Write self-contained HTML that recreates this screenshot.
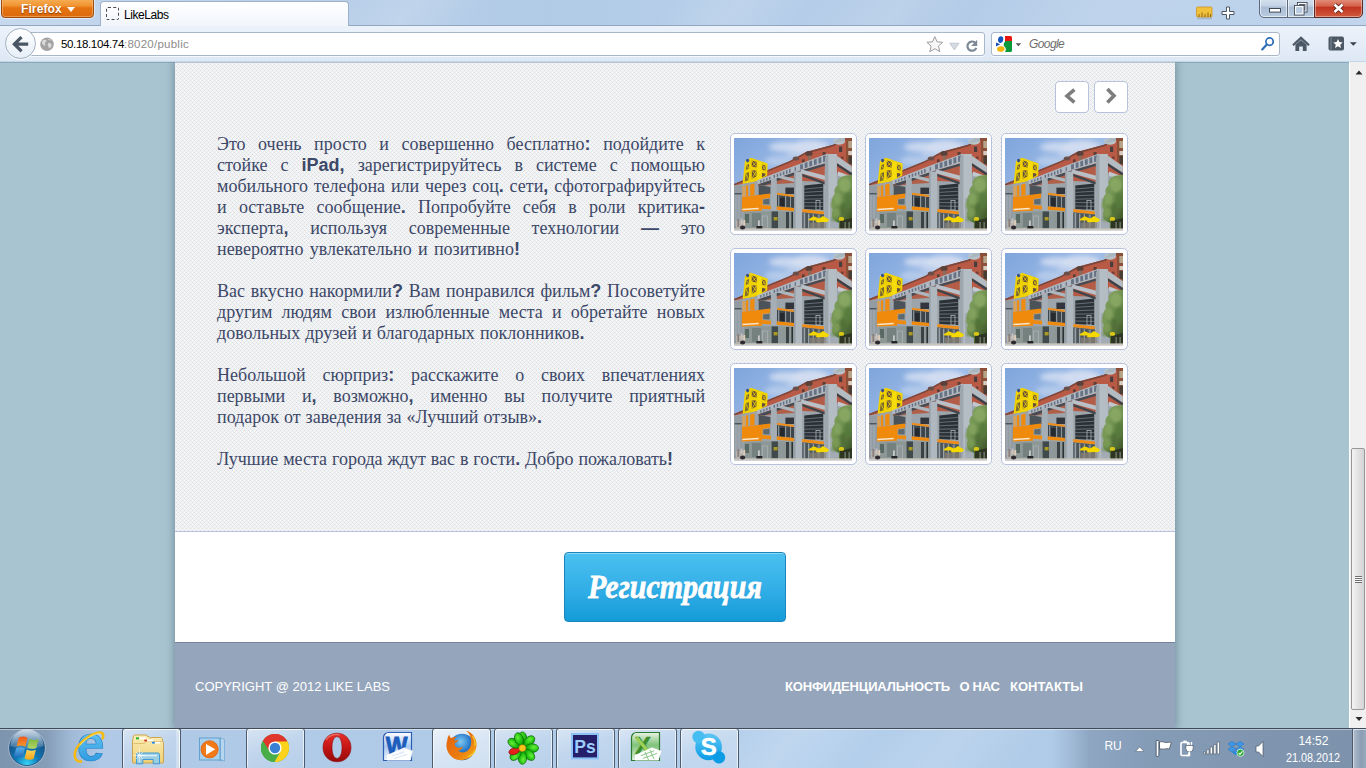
<!DOCTYPE html>
<html lang="ru">
<head>
<meta charset="utf-8">
<title>LikeLabs</title>
<style>
html,body{margin:0;padding:0;}
body{width:1366px;height:768px;overflow:hidden;position:relative;background:#a8c4d1;font-family:"Liberation Sans",sans-serif;}
.abs{position:absolute;}
/* ---------- browser chrome ---------- */
#titlebar{left:0;top:0;width:1366px;height:26px;background:linear-gradient(90deg,#c6d9ee 0%,#c0d5ec 8%,#b8cfe9 26%,#b1cae6 40%,#b6cee9 52%,#b3cbe7 68%,#b9d0ea 84%,#c1d5ec 100%);overflow:hidden;}
#titlebar .glare{left:330px;top:-40px;width:900px;height:120px;transform:skewX(-40deg);background:linear-gradient(90deg,rgba(255,255,255,0) 0%,rgba(255,255,255,.14) 8%,rgba(255,255,255,0) 16%,rgba(255,255,255,0) 36%,rgba(255,255,255,.12) 44%,rgba(255,255,255,0) 52%,rgba(255,255,255,.12) 62%,rgba(255,255,255,0) 70%,rgba(255,255,255,.1) 86%,rgba(255,255,255,0) 100%);}
#titlebar .edge{left:0;top:25px;width:1366px;height:1px;background:#93a6bf;}
#ffbtn{left:1px;top:-3px;width:93px;height:21px;border-radius:4px;border:1px solid #9c4a0c;box-sizing:border-box;background:linear-gradient(#f8b45c 0%,#f09433 40%,#e4730f 52%,#dc6a0e 100%);color:#fff;font-weight:bold;font-size:12px;line-height:23px;text-indent:19px;letter-spacing:.1px;text-shadow:0 1px 1px rgba(110,45,0,.75);box-shadow:0 0 0 1px rgba(255,255,255,.5),inset 0 0 0 1px rgba(255,210,150,.45);}
#ffbtn i{position:absolute;left:64.500px;top:9px;border:4px solid transparent;border-top:5px solid #fff;border-bottom:0;}
#tab{left:100px;top:1px;width:249px;height:26px;box-sizing:border-box;border:1px solid #9eb1c8;border-bottom:0;border-radius:4px 4px 0 0;background:linear-gradient(#ffffff,#f0f5fb);font-size:12px;color:#000;line-height:24px;}
#tab .fav{left:5px;top:5px;width:13px;height:13px;box-sizing:border-box;border:1px dashed #4a4a4a;border-radius:2px;}
#tab span{position:absolute;left:23px;top:1px;letter-spacing:-.45px;}
#wc{left:1259px;top:0;width:104px;height:18px;}
#wc .b1{left:0;top:-4px;width:29px;height:22px;box-sizing:border-box;border:1px solid #5b6a7e;border-radius:0 0 0 5px;background:linear-gradient(#dbe6f2 0%,#c3d2e4 45%,#aabdd4 50%,#b9cbdf 100%);box-shadow:inset 0 0 0 1px rgba(255,255,255,.6);}
#wc .b2{left:28px;top:-4px;width:28px;height:22px;box-sizing:border-box;border:1px solid #5b6a7e;background:linear-gradient(#dbe6f2 0%,#c3d2e4 45%,#aabdd4 50%,#b9cbdf 100%);box-shadow:inset 0 0 0 1px rgba(255,255,255,.6);}
#wc .b3{left:55px;top:-4px;width:49px;height:22px;box-sizing:border-box;border:1px solid #5a2a26;border-radius:0 0 5px 0;background:linear-gradient(#e8a08e 0%,#d5614a 45%,#c2341f 52%,#cf5a3e 100%);box-shadow:inset 0 0 0 1px rgba(255,255,255,.4);}
#navbar{left:0;top:26px;width:1366px;height:36px;background:linear-gradient(#ecf2fa,#dde8f5);}
#navbar .edge{left:0;top:35px;width:1366px;height:1px;background:#c6d6e9;}
#urlbar{left:28px;top:32px;width:957px;height:24px;box-sizing:border-box;border:1px solid #a9b8c9;border-radius:3px;background:#fff;font-size:11.500px;line-height:22px;color:#8c8c8c;letter-spacing:.25px;box-shadow:0 1px 0 rgba(255,255,255,.7);}
#urlbar b{font-weight:normal;color:#000;letter-spacing:-.35px;}
#urlbar .txt{left:32px;top:0;white-space:nowrap;}
#back{left:5px;top:28px;width:31px;height:31px;border-radius:50%;box-sizing:border-box;border:1px solid #a3b1c1;background:linear-gradient(#ffffff,#e6eef8);box-shadow:0 1px 0 rgba(255,255,255,.8);}
#search{left:991px;top:32px;width:289px;height:24px;box-sizing:border-box;border:1px solid #a9b8c9;border-radius:3px;background:#fff;font-size:12px;line-height:22px;color:#6e6e6e;font-style:italic;letter-spacing:-.6px;box-shadow:0 1px 0 rgba(255,255,255,.7);}
#search .txt{left:37px;top:0;}
/* ---------- page ---------- */
#view{left:0;top:62px;width:1349px;height:666px;background:#a8c4d1;overflow:hidden;}
#sheet{left:175px;top:0;width:1000px;height:666px;background:#fff;box-shadow:0 0 8px 1px rgba(60,85,105,.5);}
#tex{left:0;top:0;width:1000px;height:469px;background-color:#f3f4f5;border-bottom:1px solid #b9c2dc;}
.p{left:42px;width:488px;font-family:"Liberation Serif",serif;font-size:18px;line-height:21px;color:#3c4868;text-align:justify;margin:0;}
.p b{font-family:"Liberation Sans",sans-serif;font-weight:bold;font-size:18px;line-height:0;}
.ln{text-align:justify;text-align-last:justify;height:21px;white-space:normal;}
.ln.last{text-align:justify;text-align-last:justify;}
#footer{left:0;top:580px;width:1000px;height:86px;background:#95a5bb;border-top:1px solid #76859b;}
#footer .c{left:20px;top:36px;font-size:13px;color:#fff;line-height:16px;}
#footer .l{left:610px;top:36px;font-size:13px;color:#fff;line-height:16px;font-weight:bold;white-space:pre;}
#reg{left:389px;top:490px;width:222px;height:70px;box-sizing:border-box;border:1px solid #1b86bd;border-radius:4px;background:linear-gradient(#4cc0f0 0%,#31aee6 55%,#149bd8 100%);box-shadow:inset 0 1px 0 rgba(255,255,255,.35);color:#fff;text-align:center;font-family:"Liberation Serif","DejaVu Serif",serif;font-style:italic;font-weight:bold;font-size:30px;line-height:70px;-webkit-text-stroke:.7px #fff;text-shadow:0 1px 1px rgba(0,70,120,.4);}
#reg span{display:inline-block;transform:translateY(-1px) scale(1,1.150);transform-origin:50% 55%;}
.navb{top:19px;width:34px;height:32px;box-sizing:border-box;border:1px solid #b9c2dc;border-radius:4px;background:#fff;}
.thumb{width:127px;height:102px;box-sizing:border-box;border:1px solid #b9c2dc;border-radius:5px;background:#fff;}
.thumb svg{position:absolute;left:3px;top:4px;width:118px;height:92.5px;}
/* ---------- scrollbar ---------- */
#sb{left:1349px;top:62px;width:17px;height:666px;background:#f0f0f0;border-left:1px solid #fff;box-sizing:border-box;}
#sbt i{position:absolute;left:3px;top:127px;width:7px;height:7px;background:repeating-linear-gradient(#6d6d6d 0,#6d6d6d 1px,#fdfdfd 1px,#fdfdfd 2px);}
#sbt{left:1px;top:386px;width:14px;height:262px;box-sizing:border-box;border:1px solid #979797;border-radius:2px;background:linear-gradient(90deg,#f4f4f4,#e2e2e2 50%,#d4d4d4);}
/* ---------- taskbar ---------- */
#taskbar{left:0;top:728px;width:1366px;height:40px;overflow:hidden;background:linear-gradient(90deg,#7d94af 0%,#879eb9 3.500%,#9fb9d6 5.200%,#afc9e6 7.500%,#b0cbe8 40%,#b4cfec 60%,#b0cbe8 77%,#a0bad7 78.400%,#8ea6c2 79.800%,#859cb7 84%,#8096b0 92%,#7c92ab 100%);border-top:1px solid #3f4b5a;box-sizing:border-box;}
#taskbar .tglare{left:700px;top:-30px;width:330px;height:100px;transform:skewX(-42deg);background:linear-gradient(90deg,rgba(255,255,255,0),rgba(255,255,255,.16) 25%,rgba(255,255,255,0) 50%,rgba(255,255,255,.13) 75%,rgba(255,255,255,0));}
#taskbar .thl{left:0;top:0;width:1366px;height:1px;background:rgba(255,255,255,.45);}
.tb{top:-1px;width:59px;height:42px;box-sizing:border-box;border:1px solid #4d5b6e;border-radius:3px;background:linear-gradient(160deg,rgba(255,255,255,.5) 0%,rgba(255,255,255,.22) 45%,rgba(255,255,255,.1) 100%);box-shadow:inset 0 0 0 1px rgba(255,255,255,.62);}
.tb.act{background:linear-gradient(160deg,rgba(255,255,255,.75) 0%,rgba(255,255,255,.5) 50%,rgba(255,255,255,.4) 100%);}
.tb2{top:-1px;width:5px;height:42px;box-sizing:border-box;border:1px solid #4d5b6e;border-left:0;border-radius:0 3px 3px 0;background:rgba(255,255,255,.3);box-shadow:inset -1px 1px 0 rgba(255,255,255,.6);}
.showdesk{left:1352px;top:-1px;width:16px;height:42px;box-sizing:border-box;border:1px solid #4d5b6e;background:linear-gradient(90deg,rgba(255,255,255,.4),rgba(255,255,255,.1) 60%,rgba(255,255,255,.25));box-shadow:inset 0 0 0 1px rgba(255,255,255,.4);}
</style>
</head>
<body>
<svg width="0" height="0" style="position:absolute">
 <defs>
  <linearGradient id="sky" x1="0" y1="0" x2="1" y2="0.9">
   <stop offset="0" stop-color="#7fa5dc"/><stop offset="0.45" stop-color="#9dbbe6"/><stop offset="1" stop-color="#c3d3ec"/>
  </linearGradient>
  <linearGradient id="tree" x1="0" y1="0" x2="0.6" y2="1">
   <stop offset="0" stop-color="#8aa866"/><stop offset="0.6" stop-color="#688a4a"/><stop offset="1" stop-color="#42592c"/>
  </linearGradient>
  <filter id="cl" x="-30%" y="-60%" width="160%" height="220%"><feGaussianBlur stdDeviation="2.600"/></filter>
  <filter id="lf" x="-20%" y="-20%" width="140%" height="140%"><feGaussianBlur stdDeviation="1.100"/></filter>
  <filter id="soft" x="-5%" y="-5%" width="110%" height="110%"><feGaussianBlur stdDeviation="0.55"/></filter>
  <clipPath id="pc"><rect x="0" y="0" width="118" height="92.5"/></clipPath>
  
 </defs>
</svg>
<!-- content viewport -->
<div id="view" class="abs"><div class="abs" style="left:0;top:0;width:1349px;height:1px;background:rgba(90,115,140,.35);z-index:3"></div>
 <div id="sheet" class="abs">
  <div id="tex" class="abs"><svg class="abs" style="left:0;top:0" width="1000" height="469"><defs><pattern id="dots" width="4" height="4" patternUnits="userSpaceOnUse"><rect x="1" y="0" width="1" height="1" fill="#dadcdf"/><rect x="3" y="2" width="1" height="1" fill="#dadcdf"/><rect x="0" y="1" width="1" height="1" fill="#eaebed"/><rect x="2" y="1" width="1" height="1" fill="#eaebed"/><rect x="2" y="3" width="1" height="1" fill="#eaebed"/><rect x="0" y="3" width="1" height="1" fill="#eaebed"/></pattern></defs><rect width="1000" height="469" fill="url(#dots)"/></svg></div>
  <div class="abs p" style="top:72px">
   <div class="ln">Это очень просто и совершенно бесплатно<b>:</b> подойдите к</div>
   <div class="ln">стойке с <b>iPad,</b> зарегистрируйтесь в системе с помощью</div>
   <div class="ln">мобильного телефона или через соц<b>.</b> сети<b>,</b> сфотографируйтесь</div>
   <div class="ln">и оставьте сообщение<b>.</b> Попробуйте себя в роли критика<b>-</b></div>
   <div class="ln">эксперта<b>,</b> используя современные технологии <b>—</b> это</div>
   <div class="ln last" style="width:303px">невероятно увлекательно и позитивно<b>!</b></div>
  </div>
  <div class="abs p" style="top:219px">
   <div class="ln">Вас вкусно накормили<b>?</b> Вам понравился фильм<b>?</b> Посоветуйте</div>
   <div class="ln">другим людям свои излюбленные места и обретайте новых</div>
   <div class="ln last" style="width:367.5px">довольных друзей и благодарных поклонников<b>.</b></div>
  </div>
  <div class="abs p" style="top:303px">
   <div class="ln">Небольшой сюрприз<b>:</b> расскажите о своих впечатлениях</div>
   <div class="ln">первыми и<b>,</b> возможно<b>,</b> именно вы получите приятный</div>
   <div class="ln last" style="width:325px">подарок от заведения за «Лучший отзыв»<b>.</b></div>
  </div>
  <div class="abs p" style="top:387px">
   <div class="ln last" style="width:456px">Лучшие места города ждут вас в гости<b>.</b> Добро пожаловать<b>!</b></div>
  </div>
  <div class="abs navb" style="left:880px"><svg class="abs" style="left:0;top:0" width="32" height="30" viewBox="0 0 32 30"><polyline points="18.400,7.600 11,14 18.400,20.400" fill="none" stroke="#7d7d7d" stroke-width="3.600"/></svg></div>
  <div class="abs navb" style="left:919px"><svg class="abs" style="left:0;top:0" width="32" height="30" viewBox="0 0 32 30"><polyline points="12.400,7 19,13.800 12.400,20.600" fill="none" stroke="#7d7d7d" stroke-width="3.600"/></svg></div>
  <div class="abs thumb" style="left:555px;top:71px"><svg viewBox="0 0 118 92.5" preserveAspectRatio="none">
   <g clip-path="url(#pc)">
   <rect width="118" height="93" fill="url(#sky)"/>
   <g filter="url(#soft)">
    <!-- clouds -->
    <g filter="url(#cl)"><ellipse cx="52" cy="9" rx="17" ry="5" fill="#d3def2" opacity=".85"/><ellipse cx="76" cy="9" rx="19" ry="7" fill="#d6e0f2" opacity=".9"/><ellipse cx="44" cy="23" rx="13" ry="5" fill="#bccfec" opacity=".8"/><ellipse cx="62" cy="17" rx="10" ry="4" fill="#c6d5ee" opacity=".7"/></g>
    <!-- brick building -->
    <polygon points="0,46 34,32 56,23 72,14 99,6.8 112,0 118,0 118,60 0,60" fill="#b85a45"/>
    <polygon points="0,46 34,32 56,23 72,14 99,6.8 112,0 112,2 99,8.6 72,15.8 56,24.6 34,33.6 0,47.6" fill="#7a4638"/>
    <polygon points="112,0 118,0 118,30 112,26" fill="#8c5038"/>
    <rect x="114.3" y="3" width="3.7" height="7" fill="#b7a488"/><rect x="114.3" y="13" width="3.7" height="4" fill="#d4ccc0"/><rect x="114.5" y="18" width="3.5" height="8" fill="#4a3d35"/>
    <ellipse cx="105" cy="3.6" rx="6" ry="3.2" fill="#b8c2c8"/>
    <polygon points="99.5,5 105,0.3 111,0.3 111,3" fill="#a9b6bd"/>
    <ellipse cx="75" cy="15.5" rx="3.6" ry="2.6" fill="#5a4038"/>
    <ellipse cx="62" cy="20.5" rx="3.2" ry="2" fill="#6a5048"/>
    <rect x="105" y="8.6" width="3.2" height="5.4" fill="#4a3d3d"/>
    <rect x="88.6" y="14" width="3" height="3.4" fill="#5a3c34"/>
    <rect x="74" y="17.6" width="3.4" height="4.4" fill="#8c6a58"/>
    <rect x="68" y="21.4" width="2.6" height="3" fill="#5a3c34"/>
    <rect x="89" y="27" width="3" height="5" fill="#6a3d32"/>
    <rect x="107" y="18.6" width="2.4" height="3" fill="#6a3d32"/>
    <!-- yellow tower -->
    <polygon points="11,23 17,19.800 33.600,25.600 33.200,37.400 24,43 14,45.400 8.600,46" fill="#efd200"/>
    <polygon points="17.800,22.600 22.600,24 22.600,29.400 17.800,28.600" fill="#5e4440"/>
    <polygon points="28,26.600 31.600,27.800 31.600,32.400 28,31.800" fill="#5e4440"/>
    <polygon points="17.800,32 22.400,32.800 22.400,38.200 17.800,41" fill="#66503e"/>
    <polygon points="28,35 31.400,35.400 31.200,37.400 28,39.400" fill="#66503e"/>
    <polygon points="12.200,27.400 15,25.800 15,30.600 11.800,32" fill="#7c6c30"/>
    <polygon points="11.600,35.400 15,34 15,42 10.800,43.400" fill="#7c6c30"/>
    <path d="M17.800 22.600l4.800 6.800M22.600 24l-4.800 4.600M28 26.600l3.600 5.800M31.600 27.800l-3.600 4M17.800 32l4.600 6.200M22.400 32.800l-4.600 8.200M12.200 27.400l2.800 3.200M11.600 35.400l3.400 6.600" stroke="#e8cc0c" stroke-width=".9" fill="none"/>
    <rect x="23.200" y="24" width="4.200" height="19" fill="#f6dc08"/>
    <ellipse cx="13.600" cy="22.600" rx="1.600" ry="1.800" fill="#3a4f8a"/>
    <!-- grey facade base -->
    <polygon points="0,47.6 8,46 24,43 36,41 60,38 94,33 118,38 118,93 0,93" fill="#9ca5ac"/>
    <!-- brick visible below main beam -->
    <polygon points="68,30 94,21 94,44 68,43" fill="#b35c47"/><polygon points="42.700,39 60,33 60,45 42.700,46" fill="#b05e4a"/><polygon points="24,46 37,41.600 37,47 24,48" fill="#a86452"/>
    <polygon points="67.7,37.6 77.5,38.6 77.5,43 67.7,42" fill="#b65a44"/>
    <polygon points="103,17 118,28 118,40 103,34" fill="#b65a44"/>
    
    <!-- beam undersides (dark) -->
    <polygon points="24,46.200 62,33.800 93.800,24.600 93.800,27 62,36.600 30,47.400" fill="#474c52"/>
    <polygon points="66,35 92,44.6 92,47 66,37.6" fill="#40454b"/>
    <polygon points="103,25 118,34.6 118,38 103,28" fill="#3c4147"/>
    <!-- second beam (receding) -->
    <polygon points="67.6,31.6 94.4,38.6 94.4,43 66,35" fill="#b9c0c7"/>
    <polygon points="43,36.6 60,40.6 60,44 43,39.6" fill="#aeb6bd"/>
    <polygon points="104,33.6 117.8,38.6 117.8,41 104,38" fill="#c2c8ce"/>
    <!-- main beam with letters -->
    <polygon points="22.700,42.400 62,27.200 93.800,15.600 93.800,24.600 62,33.800 24,46.200" fill="#b0b8c1"/>
    <g fill="#667284">
     <polygon points="26,42.600 27.400,42.100 27.600,44.200 26.200,44.700"/><polygon points="29,41.500 30.400,41 30.600,43.200 29.200,43.700"/><polygon points="32,40.300 33.400,39.800 33.600,42.200 32.200,42.700"/><polygon points="35,39.200 36.400,38.700 36.600,41.200 35.200,41.700"/>
     <polygon points="39.500,37.300 41,36.800 41.200,39.600 39.700,40.100"/><polygon points="42.600,36.100 44.100,35.600 44.300,38.600 42.800,39.100"/><polygon points="45.700,34.900 47.200,34.400 47.400,37.500 45.900,38"/><polygon points="48.800,33.700 50.300,33.200 50.500,36.500 49,37"/><polygon points="51.900,32.500 53.400,32 53.600,35.500 52.100,36"/><polygon points="55,31.300 56.500,30.800 56.700,34.500 55.200,35"/>
     <polygon points="60.600,29.400 61.800,29 62,32.600 60.800,33"/>
     <polygon points="66,26.800 68.800,25.800 69,30.800 66.200,31.700"/><polygon points="70.600,25.100 73.400,24.100 73.600,29.300 70.800,30.200"/><polygon points="75.200,23.400 78,22.400 78.200,27.800 75.400,28.700"/><polygon points="79.800,21.700 82.600,20.700 82.800,26.300 80,27.200"/><polygon points="84.400,20 87.200,19 87.400,24.800 84.600,25.700"/><polygon points="89,18.300 91.800,17.300 92,23.300 89.200,24.200"/>
    </g>
    <!-- right diagonal beam -->
    <polygon points="102.9,17.8 117.8,28.2 117.8,34.7 102.9,25" fill="#b4bcc3"/>
    <!-- left wall -->
    <rect x="0" y="47.6" width="8.4" height="44" fill="#939ca3"/>
    <rect x="0.6" y="55" width="7" height="1.4" fill="#4e565e"/>
    <rect x="1.6" y="57" width="0.8" height="30" fill="#aab2b8"/><rect x="4.6" y="57" width="0.8" height="30" fill="#aab2b8"/>
    <!-- glass upper areas -->
    <polygon points="24.7,47 36.4,49 36.4,56 24.7,57.5" fill="#4b5359"/>
    <rect x="51.4" y="49.6" width="8.6" height="6.4" fill="#30363b"/>
    <polygon points="43,57 60,59 60,70 43,68.4" fill="#3d444b"/>
    <rect x="44.2" y="57.4" width="1" height="11.4" fill="#9aa3a9"/><rect x="51" y="58" width="1.2" height="11.4" fill="#8e979d"/><rect x="56" y="58.6" width="1" height="11.2" fill="#8e979d"/>
    <rect x="46" y="60" width="4.6" height="8" fill="#252a2f"/>
    <polygon points="70.3,47.6 89.2,45.6 89.2,72 70.3,71" fill="#2b3137"/>
    <g stroke="#7f8990" stroke-width="0.7"><line x1="70.3" y1="51" x2="89.2" y2="49.4"/><line x1="70.3" y1="54.4" x2="89.2" y2="53.2"/><line x1="70.3" y1="57.8" x2="89.2" y2="57"/><line x1="70.3" y1="61.2" x2="89.2" y2="60.8"/><line x1="70.3" y1="64.6" x2="89.2" y2="64.6"/><line x1="70.3" y1="68" x2="89.2" y2="68.4"/></g>
    <rect x="82" y="62.4" width="4" height="9.6" fill="none" stroke="#aab3b9" stroke-width="0.8"/>
    <!-- orange -->
    <rect x="8.4" y="48" width="3" height="11" fill="#d9a05a"/>
    <polygon points="12,47.4 14.2,47 14.2,58 12,58.4" fill="#f08c10"/>
    <polygon points="16.2,46.4 20.5,45.6 20.5,57.2 16.2,57.8" fill="#f08c10"/>
    <polygon points="8.1,59 28,56.4 36.1,55.4 36.1,60 28.6,61 28.6,67.1 59.8,70.1 59.8,73 28,70.7 28,72.7 7.8,73.6" fill="#ef8a0e"/>
    <polygon points="8.4,70.7 24.7,69.7 24.7,71.3 8.4,72.3" fill="#f8e6cc"/>
    <polygon points="29.2,61.6 35.6,60.8 35.6,66.6 29.2,66.2" fill="#5d6a70"/>
    <polygon points="42.9,54.8 59.8,57 59.8,59 42.9,56.8" fill="#ee8c14"/>
    <polygon points="56,69.8 60,70.2 60,73.2 56,72.8" fill="#ef8a0e"/>
    <polygon points="67,71 89.9,73.6 89.9,76.4 67,74" fill="#ee8c14"/>
    <!-- ground floor glass -->
    <polygon points="9.700,74.200 28,73.200 59.800,73.400 59.800,90.600 9.700,90.600" fill="#8d9896"/>
    <rect x="11" y="76" width="4" height="9" fill="#596762"/>
    <rect x="18" y="75" width="9" height="14" fill="#74817e"/>
    <rect x="37.600" y="73.400" width="6.400" height="17" fill="#414a4c"/>
    <rect x="39.6" y="79" width="4" height="3.4" fill="#a89a22"/>
    <rect x="52" y="74" width="3" height="16.600" fill="#3a4245"/>
    <rect x="57.4" y="74" width="1.6" height="16.6" fill="#2c3336"/>
    <rect x="28.4" y="78" width="5" height="12.6" fill="none" stroke="#a9b1b4" stroke-width="0.8"/>
    <rect x="45.4" y="73.4" width="3.2" height="17.2" fill="#8f999c"/>
    <polygon points="67,74.300 90,76.600 90,90.600 67,90.600" fill="#4d5559"/>
    <rect x="69.6" y="75" width="1.6" height="15.6" fill="#98a1a5"/><rect x="74" y="75.6" width="1.4" height="15" fill="#98a1a5"/><rect x="78.6" y="76" width="1.4" height="14.6" fill="#8c9599"/><rect x="83.6" y="76.4" width="2.4" height="14.2" fill="#7c868b"/>
    <!-- columns -->
    <polygon points="37,41 42.7,39.6 42.7,73 37,72.4" fill="#a5aeb5"/>
    <rect x="60" y="33.5" width="8.2" height="57.6" fill="#b0b8bf"/>
    <rect x="60" y="33.5" width="1.6" height="57.6" fill="#969fa7"/>
    <polygon points="91,20 94.4,16 102.9,15.9 103,91 90.4,91" fill="#b5bdc4"/>
    <polygon points="91,20 94.4,16 94.4,91 90.4,91" fill="#9da6ad"/>
    <rect x="96" y="60" width="8" height="31" fill="#a3acb4"/>
    <!-- umbrellas -->
    <polygon points="74.2,81.6 79.6,78.2 85.3,80.6 84,82.4 75.6,82.4" fill="#f2d400"/>
    <polygon points="81.4,83 89,77.9 95,81.6 93.6,84 83,84.4" fill="#f5d800"/>
    <rect x="76" y="84.6" width="16" height="5.6" fill="#8a8478" opacity=".7"/>
    <!-- tree -->
    <path d="M104,47 C102,42 107,38 112,37.600 L118,36.800 L118,92 L105,92 L105,85 C99,83 96.600,78 99,72 C96,67 97.600,59 101,56 C99.600,52 101,49 104,47Z" fill="url(#tree)"/>
    <g filter="url(#lf)">
     <ellipse cx="111" cy="47" rx="6" ry="7" fill="#8cab66" opacity=".8"/>
     <ellipse cx="103.500" cy="61" rx="4" ry="6" fill="#86a660" opacity=".8"/>
     <ellipse cx="114" cy="62" rx="4" ry="8" fill="#557a3c" opacity=".8"/>
     <ellipse cx="102" cy="75" rx="4" ry="5" fill="#7e9e58" opacity=".8"/>
     <ellipse cx="109" cy="71" rx="3" ry="6" fill="#4c6e36" opacity=".75"/>
     <ellipse cx="99" cy="68" rx="2.400" ry="3" fill="#7d9d5a" opacity=".7"/>
     <ellipse cx="100" cy="81" rx="3" ry="2.400" fill="#6c8c4c" opacity=".7"/>
    </g>
    <polygon points="106,83 118,80 118,92 106,92" fill="#2d3622"/>
    <rect x="104.800" y="79" width="5.200" height="3.800" rx="1.600" fill="#d8c616"/>
    <rect x="110.600" y="84" width="1" height="8" fill="#8d968c"/><rect x="114.600" y="84" width="1" height="8" fill="#8d968c"/>
    <!-- ground + people -->
    <rect x="0" y="90.4" width="118" height="2.6" fill="#cbc6bd"/>
    <rect x="2" y="83" width="9" height="8" fill="#b7b4b0"/>
    <rect x="3.4" y="81" width="1.8" height="8" fill="#8a7f7a"/><rect x="6.6" y="80.6" width="1.8" height="5" fill="#c9c4c0"/><rect x="9.4" y="82" width="1.8" height="5" fill="#e0cdb8"/>
    <ellipse cx="8.6" cy="89.4" rx="2.6" ry="2" fill="#2d2a30"/>
    <rect x="24" y="82.4" width="1.8" height="6.6" fill="#c7c9cc"/><rect x="22.4" y="88" width="6" height="2.4" fill="#26282c"/>
   </g>
   </g>
</svg></div>
  <div class="abs thumb" style="left:690px;top:71px"><svg viewBox="0 0 118 92.5" preserveAspectRatio="none">
   <g clip-path="url(#pc)">
   <rect width="118" height="93" fill="url(#sky)"/>
   <g filter="url(#soft)">
    <!-- clouds -->
    <g filter="url(#cl)"><ellipse cx="52" cy="9" rx="17" ry="5" fill="#d3def2" opacity=".85"/><ellipse cx="76" cy="9" rx="19" ry="7" fill="#d6e0f2" opacity=".9"/><ellipse cx="44" cy="23" rx="13" ry="5" fill="#bccfec" opacity=".8"/><ellipse cx="62" cy="17" rx="10" ry="4" fill="#c6d5ee" opacity=".7"/></g>
    <!-- brick building -->
    <polygon points="0,46 34,32 56,23 72,14 99,6.8 112,0 118,0 118,60 0,60" fill="#b85a45"/>
    <polygon points="0,46 34,32 56,23 72,14 99,6.8 112,0 112,2 99,8.6 72,15.8 56,24.6 34,33.6 0,47.6" fill="#7a4638"/>
    <polygon points="112,0 118,0 118,30 112,26" fill="#8c5038"/>
    <rect x="114.3" y="3" width="3.7" height="7" fill="#b7a488"/><rect x="114.3" y="13" width="3.7" height="4" fill="#d4ccc0"/><rect x="114.5" y="18" width="3.5" height="8" fill="#4a3d35"/>
    <ellipse cx="105" cy="3.6" rx="6" ry="3.2" fill="#b8c2c8"/>
    <polygon points="99.5,5 105,0.3 111,0.3 111,3" fill="#a9b6bd"/>
    <ellipse cx="75" cy="15.5" rx="3.6" ry="2.6" fill="#5a4038"/>
    <ellipse cx="62" cy="20.5" rx="3.2" ry="2" fill="#6a5048"/>
    <rect x="105" y="8.6" width="3.2" height="5.4" fill="#4a3d3d"/>
    <rect x="88.6" y="14" width="3" height="3.4" fill="#5a3c34"/>
    <rect x="74" y="17.6" width="3.4" height="4.4" fill="#8c6a58"/>
    <rect x="68" y="21.4" width="2.6" height="3" fill="#5a3c34"/>
    <rect x="89" y="27" width="3" height="5" fill="#6a3d32"/>
    <rect x="107" y="18.6" width="2.4" height="3" fill="#6a3d32"/>
    <!-- yellow tower -->
    <polygon points="11,23 17,19.800 33.600,25.600 33.200,37.400 24,43 14,45.400 8.600,46" fill="#efd200"/>
    <polygon points="17.800,22.600 22.600,24 22.600,29.400 17.800,28.600" fill="#5e4440"/>
    <polygon points="28,26.600 31.600,27.800 31.600,32.400 28,31.800" fill="#5e4440"/>
    <polygon points="17.800,32 22.400,32.800 22.400,38.200 17.800,41" fill="#66503e"/>
    <polygon points="28,35 31.400,35.400 31.200,37.400 28,39.400" fill="#66503e"/>
    <polygon points="12.200,27.400 15,25.800 15,30.600 11.800,32" fill="#7c6c30"/>
    <polygon points="11.600,35.400 15,34 15,42 10.800,43.400" fill="#7c6c30"/>
    <path d="M17.800 22.600l4.800 6.800M22.600 24l-4.800 4.600M28 26.600l3.600 5.800M31.600 27.800l-3.600 4M17.800 32l4.600 6.200M22.400 32.800l-4.600 8.200M12.200 27.400l2.800 3.200M11.600 35.400l3.400 6.600" stroke="#e8cc0c" stroke-width=".9" fill="none"/>
    <rect x="23.200" y="24" width="4.200" height="19" fill="#f6dc08"/>
    <ellipse cx="13.600" cy="22.600" rx="1.600" ry="1.800" fill="#3a4f8a"/>
    <!-- grey facade base -->
    <polygon points="0,47.6 8,46 24,43 36,41 60,38 94,33 118,38 118,93 0,93" fill="#9ca5ac"/>
    <!-- brick visible below main beam -->
    <polygon points="68,30 94,21 94,44 68,43" fill="#b35c47"/><polygon points="42.700,39 60,33 60,45 42.700,46" fill="#b05e4a"/><polygon points="24,46 37,41.600 37,47 24,48" fill="#a86452"/>
    <polygon points="67.7,37.6 77.5,38.6 77.5,43 67.7,42" fill="#b65a44"/>
    <polygon points="103,17 118,28 118,40 103,34" fill="#b65a44"/>
    
    <!-- beam undersides (dark) -->
    <polygon points="24,46.200 62,33.800 93.800,24.600 93.800,27 62,36.600 30,47.400" fill="#474c52"/>
    <polygon points="66,35 92,44.6 92,47 66,37.6" fill="#40454b"/>
    <polygon points="103,25 118,34.6 118,38 103,28" fill="#3c4147"/>
    <!-- second beam (receding) -->
    <polygon points="67.6,31.6 94.4,38.6 94.4,43 66,35" fill="#b9c0c7"/>
    <polygon points="43,36.6 60,40.6 60,44 43,39.6" fill="#aeb6bd"/>
    <polygon points="104,33.6 117.8,38.6 117.8,41 104,38" fill="#c2c8ce"/>
    <!-- main beam with letters -->
    <polygon points="22.700,42.400 62,27.200 93.800,15.600 93.800,24.600 62,33.800 24,46.200" fill="#b0b8c1"/>
    <g fill="#667284">
     <polygon points="26,42.600 27.400,42.100 27.600,44.200 26.200,44.700"/><polygon points="29,41.500 30.400,41 30.600,43.200 29.200,43.700"/><polygon points="32,40.300 33.400,39.800 33.600,42.200 32.200,42.700"/><polygon points="35,39.200 36.400,38.700 36.600,41.200 35.200,41.700"/>
     <polygon points="39.500,37.300 41,36.800 41.200,39.600 39.700,40.100"/><polygon points="42.600,36.100 44.100,35.600 44.300,38.600 42.800,39.100"/><polygon points="45.700,34.900 47.200,34.400 47.400,37.500 45.900,38"/><polygon points="48.800,33.700 50.300,33.200 50.500,36.500 49,37"/><polygon points="51.900,32.500 53.400,32 53.600,35.500 52.100,36"/><polygon points="55,31.300 56.500,30.800 56.700,34.500 55.200,35"/>
     <polygon points="60.600,29.400 61.800,29 62,32.600 60.800,33"/>
     <polygon points="66,26.800 68.800,25.800 69,30.800 66.200,31.700"/><polygon points="70.600,25.100 73.400,24.100 73.600,29.300 70.800,30.200"/><polygon points="75.200,23.400 78,22.400 78.200,27.800 75.400,28.700"/><polygon points="79.800,21.700 82.600,20.700 82.800,26.300 80,27.200"/><polygon points="84.400,20 87.200,19 87.400,24.800 84.600,25.700"/><polygon points="89,18.300 91.800,17.300 92,23.300 89.200,24.200"/>
    </g>
    <!-- right diagonal beam -->
    <polygon points="102.9,17.8 117.8,28.2 117.8,34.7 102.9,25" fill="#b4bcc3"/>
    <!-- left wall -->
    <rect x="0" y="47.6" width="8.4" height="44" fill="#939ca3"/>
    <rect x="0.6" y="55" width="7" height="1.4" fill="#4e565e"/>
    <rect x="1.6" y="57" width="0.8" height="30" fill="#aab2b8"/><rect x="4.6" y="57" width="0.8" height="30" fill="#aab2b8"/>
    <!-- glass upper areas -->
    <polygon points="24.7,47 36.4,49 36.4,56 24.7,57.5" fill="#4b5359"/>
    <rect x="51.4" y="49.6" width="8.6" height="6.4" fill="#30363b"/>
    <polygon points="43,57 60,59 60,70 43,68.4" fill="#3d444b"/>
    <rect x="44.2" y="57.4" width="1" height="11.4" fill="#9aa3a9"/><rect x="51" y="58" width="1.2" height="11.4" fill="#8e979d"/><rect x="56" y="58.6" width="1" height="11.2" fill="#8e979d"/>
    <rect x="46" y="60" width="4.6" height="8" fill="#252a2f"/>
    <polygon points="70.3,47.6 89.2,45.6 89.2,72 70.3,71" fill="#2b3137"/>
    <g stroke="#7f8990" stroke-width="0.7"><line x1="70.3" y1="51" x2="89.2" y2="49.4"/><line x1="70.3" y1="54.4" x2="89.2" y2="53.2"/><line x1="70.3" y1="57.8" x2="89.2" y2="57"/><line x1="70.3" y1="61.2" x2="89.2" y2="60.8"/><line x1="70.3" y1="64.6" x2="89.2" y2="64.6"/><line x1="70.3" y1="68" x2="89.2" y2="68.4"/></g>
    <rect x="82" y="62.4" width="4" height="9.6" fill="none" stroke="#aab3b9" stroke-width="0.8"/>
    <!-- orange -->
    <rect x="8.4" y="48" width="3" height="11" fill="#d9a05a"/>
    <polygon points="12,47.4 14.2,47 14.2,58 12,58.4" fill="#f08c10"/>
    <polygon points="16.2,46.4 20.5,45.6 20.5,57.2 16.2,57.8" fill="#f08c10"/>
    <polygon points="8.1,59 28,56.4 36.1,55.4 36.1,60 28.6,61 28.6,67.1 59.8,70.1 59.8,73 28,70.7 28,72.7 7.8,73.6" fill="#ef8a0e"/>
    <polygon points="8.4,70.7 24.7,69.7 24.7,71.3 8.4,72.3" fill="#f8e6cc"/>
    <polygon points="29.2,61.6 35.6,60.8 35.6,66.6 29.2,66.2" fill="#5d6a70"/>
    <polygon points="42.9,54.8 59.8,57 59.8,59 42.9,56.8" fill="#ee8c14"/>
    <polygon points="56,69.8 60,70.2 60,73.2 56,72.8" fill="#ef8a0e"/>
    <polygon points="67,71 89.9,73.6 89.9,76.4 67,74" fill="#ee8c14"/>
    <!-- ground floor glass -->
    <polygon points="9.700,74.200 28,73.200 59.800,73.400 59.800,90.600 9.700,90.600" fill="#8d9896"/>
    <rect x="11" y="76" width="4" height="9" fill="#596762"/>
    <rect x="18" y="75" width="9" height="14" fill="#74817e"/>
    <rect x="37.600" y="73.400" width="6.400" height="17" fill="#414a4c"/>
    <rect x="39.6" y="79" width="4" height="3.4" fill="#a89a22"/>
    <rect x="52" y="74" width="3" height="16.600" fill="#3a4245"/>
    <rect x="57.4" y="74" width="1.6" height="16.6" fill="#2c3336"/>
    <rect x="28.4" y="78" width="5" height="12.6" fill="none" stroke="#a9b1b4" stroke-width="0.8"/>
    <rect x="45.4" y="73.4" width="3.2" height="17.2" fill="#8f999c"/>
    <polygon points="67,74.300 90,76.600 90,90.600 67,90.600" fill="#4d5559"/>
    <rect x="69.6" y="75" width="1.6" height="15.6" fill="#98a1a5"/><rect x="74" y="75.6" width="1.4" height="15" fill="#98a1a5"/><rect x="78.6" y="76" width="1.4" height="14.6" fill="#8c9599"/><rect x="83.6" y="76.4" width="2.4" height="14.2" fill="#7c868b"/>
    <!-- columns -->
    <polygon points="37,41 42.7,39.6 42.7,73 37,72.4" fill="#a5aeb5"/>
    <rect x="60" y="33.5" width="8.2" height="57.6" fill="#b0b8bf"/>
    <rect x="60" y="33.5" width="1.6" height="57.6" fill="#969fa7"/>
    <polygon points="91,20 94.4,16 102.9,15.9 103,91 90.4,91" fill="#b5bdc4"/>
    <polygon points="91,20 94.4,16 94.4,91 90.4,91" fill="#9da6ad"/>
    <rect x="96" y="60" width="8" height="31" fill="#a3acb4"/>
    <!-- umbrellas -->
    <polygon points="74.2,81.6 79.6,78.2 85.3,80.6 84,82.4 75.6,82.4" fill="#f2d400"/>
    <polygon points="81.4,83 89,77.9 95,81.6 93.6,84 83,84.4" fill="#f5d800"/>
    <rect x="76" y="84.6" width="16" height="5.6" fill="#8a8478" opacity=".7"/>
    <!-- tree -->
    <path d="M104,47 C102,42 107,38 112,37.600 L118,36.800 L118,92 L105,92 L105,85 C99,83 96.600,78 99,72 C96,67 97.600,59 101,56 C99.600,52 101,49 104,47Z" fill="url(#tree)"/>
    <g filter="url(#lf)">
     <ellipse cx="111" cy="47" rx="6" ry="7" fill="#8cab66" opacity=".8"/>
     <ellipse cx="103.500" cy="61" rx="4" ry="6" fill="#86a660" opacity=".8"/>
     <ellipse cx="114" cy="62" rx="4" ry="8" fill="#557a3c" opacity=".8"/>
     <ellipse cx="102" cy="75" rx="4" ry="5" fill="#7e9e58" opacity=".8"/>
     <ellipse cx="109" cy="71" rx="3" ry="6" fill="#4c6e36" opacity=".75"/>
     <ellipse cx="99" cy="68" rx="2.400" ry="3" fill="#7d9d5a" opacity=".7"/>
     <ellipse cx="100" cy="81" rx="3" ry="2.400" fill="#6c8c4c" opacity=".7"/>
    </g>
    <polygon points="106,83 118,80 118,92 106,92" fill="#2d3622"/>
    <rect x="104.800" y="79" width="5.200" height="3.800" rx="1.600" fill="#d8c616"/>
    <rect x="110.600" y="84" width="1" height="8" fill="#8d968c"/><rect x="114.600" y="84" width="1" height="8" fill="#8d968c"/>
    <!-- ground + people -->
    <rect x="0" y="90.4" width="118" height="2.6" fill="#cbc6bd"/>
    <rect x="2" y="83" width="9" height="8" fill="#b7b4b0"/>
    <rect x="3.4" y="81" width="1.8" height="8" fill="#8a7f7a"/><rect x="6.6" y="80.6" width="1.8" height="5" fill="#c9c4c0"/><rect x="9.4" y="82" width="1.8" height="5" fill="#e0cdb8"/>
    <ellipse cx="8.6" cy="89.4" rx="2.6" ry="2" fill="#2d2a30"/>
    <rect x="24" y="82.4" width="1.8" height="6.6" fill="#c7c9cc"/><rect x="22.4" y="88" width="6" height="2.4" fill="#26282c"/>
   </g>
   </g>
</svg></div>
  <div class="abs thumb" style="left:826px;top:71px"><svg viewBox="0 0 118 92.5" preserveAspectRatio="none">
   <g clip-path="url(#pc)">
   <rect width="118" height="93" fill="url(#sky)"/>
   <g filter="url(#soft)">
    <!-- clouds -->
    <g filter="url(#cl)"><ellipse cx="52" cy="9" rx="17" ry="5" fill="#d3def2" opacity=".85"/><ellipse cx="76" cy="9" rx="19" ry="7" fill="#d6e0f2" opacity=".9"/><ellipse cx="44" cy="23" rx="13" ry="5" fill="#bccfec" opacity=".8"/><ellipse cx="62" cy="17" rx="10" ry="4" fill="#c6d5ee" opacity=".7"/></g>
    <!-- brick building -->
    <polygon points="0,46 34,32 56,23 72,14 99,6.8 112,0 118,0 118,60 0,60" fill="#b85a45"/>
    <polygon points="0,46 34,32 56,23 72,14 99,6.8 112,0 112,2 99,8.6 72,15.8 56,24.6 34,33.6 0,47.6" fill="#7a4638"/>
    <polygon points="112,0 118,0 118,30 112,26" fill="#8c5038"/>
    <rect x="114.3" y="3" width="3.7" height="7" fill="#b7a488"/><rect x="114.3" y="13" width="3.7" height="4" fill="#d4ccc0"/><rect x="114.5" y="18" width="3.5" height="8" fill="#4a3d35"/>
    <ellipse cx="105" cy="3.6" rx="6" ry="3.2" fill="#b8c2c8"/>
    <polygon points="99.5,5 105,0.3 111,0.3 111,3" fill="#a9b6bd"/>
    <ellipse cx="75" cy="15.5" rx="3.6" ry="2.6" fill="#5a4038"/>
    <ellipse cx="62" cy="20.5" rx="3.2" ry="2" fill="#6a5048"/>
    <rect x="105" y="8.6" width="3.2" height="5.4" fill="#4a3d3d"/>
    <rect x="88.6" y="14" width="3" height="3.4" fill="#5a3c34"/>
    <rect x="74" y="17.6" width="3.4" height="4.4" fill="#8c6a58"/>
    <rect x="68" y="21.4" width="2.6" height="3" fill="#5a3c34"/>
    <rect x="89" y="27" width="3" height="5" fill="#6a3d32"/>
    <rect x="107" y="18.6" width="2.4" height="3" fill="#6a3d32"/>
    <!-- yellow tower -->
    <polygon points="11,23 17,19.800 33.600,25.600 33.200,37.400 24,43 14,45.400 8.600,46" fill="#efd200"/>
    <polygon points="17.800,22.600 22.600,24 22.600,29.400 17.800,28.600" fill="#5e4440"/>
    <polygon points="28,26.600 31.600,27.800 31.600,32.400 28,31.800" fill="#5e4440"/>
    <polygon points="17.800,32 22.400,32.800 22.400,38.200 17.800,41" fill="#66503e"/>
    <polygon points="28,35 31.400,35.400 31.200,37.400 28,39.400" fill="#66503e"/>
    <polygon points="12.200,27.400 15,25.800 15,30.600 11.800,32" fill="#7c6c30"/>
    <polygon points="11.600,35.400 15,34 15,42 10.800,43.400" fill="#7c6c30"/>
    <path d="M17.800 22.600l4.800 6.800M22.600 24l-4.800 4.600M28 26.600l3.600 5.800M31.600 27.800l-3.600 4M17.800 32l4.600 6.200M22.400 32.800l-4.600 8.200M12.200 27.400l2.800 3.200M11.600 35.400l3.400 6.600" stroke="#e8cc0c" stroke-width=".9" fill="none"/>
    <rect x="23.200" y="24" width="4.200" height="19" fill="#f6dc08"/>
    <ellipse cx="13.600" cy="22.600" rx="1.600" ry="1.800" fill="#3a4f8a"/>
    <!-- grey facade base -->
    <polygon points="0,47.6 8,46 24,43 36,41 60,38 94,33 118,38 118,93 0,93" fill="#9ca5ac"/>
    <!-- brick visible below main beam -->
    <polygon points="68,30 94,21 94,44 68,43" fill="#b35c47"/><polygon points="42.700,39 60,33 60,45 42.700,46" fill="#b05e4a"/><polygon points="24,46 37,41.600 37,47 24,48" fill="#a86452"/>
    <polygon points="67.7,37.6 77.5,38.6 77.5,43 67.7,42" fill="#b65a44"/>
    <polygon points="103,17 118,28 118,40 103,34" fill="#b65a44"/>
    
    <!-- beam undersides (dark) -->
    <polygon points="24,46.200 62,33.800 93.800,24.600 93.800,27 62,36.600 30,47.400" fill="#474c52"/>
    <polygon points="66,35 92,44.6 92,47 66,37.6" fill="#40454b"/>
    <polygon points="103,25 118,34.6 118,38 103,28" fill="#3c4147"/>
    <!-- second beam (receding) -->
    <polygon points="67.6,31.6 94.4,38.6 94.4,43 66,35" fill="#b9c0c7"/>
    <polygon points="43,36.6 60,40.6 60,44 43,39.6" fill="#aeb6bd"/>
    <polygon points="104,33.6 117.8,38.6 117.8,41 104,38" fill="#c2c8ce"/>
    <!-- main beam with letters -->
    <polygon points="22.700,42.400 62,27.200 93.800,15.600 93.800,24.600 62,33.800 24,46.200" fill="#b0b8c1"/>
    <g fill="#667284">
     <polygon points="26,42.600 27.400,42.100 27.600,44.200 26.200,44.700"/><polygon points="29,41.500 30.400,41 30.600,43.200 29.200,43.700"/><polygon points="32,40.300 33.400,39.800 33.600,42.200 32.200,42.700"/><polygon points="35,39.200 36.400,38.700 36.600,41.200 35.200,41.700"/>
     <polygon points="39.500,37.300 41,36.800 41.200,39.600 39.700,40.100"/><polygon points="42.600,36.100 44.100,35.600 44.300,38.600 42.800,39.100"/><polygon points="45.700,34.900 47.200,34.400 47.400,37.500 45.900,38"/><polygon points="48.800,33.700 50.300,33.200 50.500,36.500 49,37"/><polygon points="51.900,32.500 53.400,32 53.600,35.500 52.100,36"/><polygon points="55,31.300 56.500,30.800 56.700,34.500 55.200,35"/>
     <polygon points="60.600,29.400 61.800,29 62,32.600 60.800,33"/>
     <polygon points="66,26.800 68.800,25.800 69,30.800 66.200,31.700"/><polygon points="70.600,25.100 73.400,24.100 73.600,29.300 70.800,30.200"/><polygon points="75.200,23.400 78,22.400 78.200,27.800 75.400,28.700"/><polygon points="79.800,21.700 82.600,20.700 82.800,26.300 80,27.200"/><polygon points="84.400,20 87.200,19 87.400,24.800 84.600,25.700"/><polygon points="89,18.300 91.800,17.300 92,23.300 89.200,24.200"/>
    </g>
    <!-- right diagonal beam -->
    <polygon points="102.9,17.8 117.8,28.2 117.8,34.7 102.9,25" fill="#b4bcc3"/>
    <!-- left wall -->
    <rect x="0" y="47.6" width="8.4" height="44" fill="#939ca3"/>
    <rect x="0.6" y="55" width="7" height="1.4" fill="#4e565e"/>
    <rect x="1.6" y="57" width="0.8" height="30" fill="#aab2b8"/><rect x="4.6" y="57" width="0.8" height="30" fill="#aab2b8"/>
    <!-- glass upper areas -->
    <polygon points="24.7,47 36.4,49 36.4,56 24.7,57.5" fill="#4b5359"/>
    <rect x="51.4" y="49.6" width="8.6" height="6.4" fill="#30363b"/>
    <polygon points="43,57 60,59 60,70 43,68.4" fill="#3d444b"/>
    <rect x="44.2" y="57.4" width="1" height="11.4" fill="#9aa3a9"/><rect x="51" y="58" width="1.2" height="11.4" fill="#8e979d"/><rect x="56" y="58.6" width="1" height="11.2" fill="#8e979d"/>
    <rect x="46" y="60" width="4.6" height="8" fill="#252a2f"/>
    <polygon points="70.3,47.6 89.2,45.6 89.2,72 70.3,71" fill="#2b3137"/>
    <g stroke="#7f8990" stroke-width="0.7"><line x1="70.3" y1="51" x2="89.2" y2="49.4"/><line x1="70.3" y1="54.4" x2="89.2" y2="53.2"/><line x1="70.3" y1="57.8" x2="89.2" y2="57"/><line x1="70.3" y1="61.2" x2="89.2" y2="60.8"/><line x1="70.3" y1="64.6" x2="89.2" y2="64.6"/><line x1="70.3" y1="68" x2="89.2" y2="68.4"/></g>
    <rect x="82" y="62.4" width="4" height="9.6" fill="none" stroke="#aab3b9" stroke-width="0.8"/>
    <!-- orange -->
    <rect x="8.4" y="48" width="3" height="11" fill="#d9a05a"/>
    <polygon points="12,47.4 14.2,47 14.2,58 12,58.4" fill="#f08c10"/>
    <polygon points="16.2,46.4 20.5,45.6 20.5,57.2 16.2,57.8" fill="#f08c10"/>
    <polygon points="8.1,59 28,56.4 36.1,55.4 36.1,60 28.6,61 28.6,67.1 59.8,70.1 59.8,73 28,70.7 28,72.7 7.8,73.6" fill="#ef8a0e"/>
    <polygon points="8.4,70.7 24.7,69.7 24.7,71.3 8.4,72.3" fill="#f8e6cc"/>
    <polygon points="29.2,61.6 35.6,60.8 35.6,66.6 29.2,66.2" fill="#5d6a70"/>
    <polygon points="42.9,54.8 59.8,57 59.8,59 42.9,56.8" fill="#ee8c14"/>
    <polygon points="56,69.8 60,70.2 60,73.2 56,72.8" fill="#ef8a0e"/>
    <polygon points="67,71 89.9,73.6 89.9,76.4 67,74" fill="#ee8c14"/>
    <!-- ground floor glass -->
    <polygon points="9.700,74.200 28,73.200 59.800,73.400 59.800,90.600 9.700,90.600" fill="#8d9896"/>
    <rect x="11" y="76" width="4" height="9" fill="#596762"/>
    <rect x="18" y="75" width="9" height="14" fill="#74817e"/>
    <rect x="37.600" y="73.400" width="6.400" height="17" fill="#414a4c"/>
    <rect x="39.6" y="79" width="4" height="3.4" fill="#a89a22"/>
    <rect x="52" y="74" width="3" height="16.600" fill="#3a4245"/>
    <rect x="57.4" y="74" width="1.6" height="16.6" fill="#2c3336"/>
    <rect x="28.4" y="78" width="5" height="12.6" fill="none" stroke="#a9b1b4" stroke-width="0.8"/>
    <rect x="45.4" y="73.4" width="3.2" height="17.2" fill="#8f999c"/>
    <polygon points="67,74.300 90,76.600 90,90.600 67,90.600" fill="#4d5559"/>
    <rect x="69.6" y="75" width="1.6" height="15.6" fill="#98a1a5"/><rect x="74" y="75.6" width="1.4" height="15" fill="#98a1a5"/><rect x="78.6" y="76" width="1.4" height="14.6" fill="#8c9599"/><rect x="83.6" y="76.4" width="2.4" height="14.2" fill="#7c868b"/>
    <!-- columns -->
    <polygon points="37,41 42.7,39.6 42.7,73 37,72.4" fill="#a5aeb5"/>
    <rect x="60" y="33.5" width="8.2" height="57.6" fill="#b0b8bf"/>
    <rect x="60" y="33.5" width="1.6" height="57.6" fill="#969fa7"/>
    <polygon points="91,20 94.4,16 102.9,15.9 103,91 90.4,91" fill="#b5bdc4"/>
    <polygon points="91,20 94.4,16 94.4,91 90.4,91" fill="#9da6ad"/>
    <rect x="96" y="60" width="8" height="31" fill="#a3acb4"/>
    <!-- umbrellas -->
    <polygon points="74.2,81.6 79.6,78.2 85.3,80.6 84,82.4 75.6,82.4" fill="#f2d400"/>
    <polygon points="81.4,83 89,77.9 95,81.6 93.6,84 83,84.4" fill="#f5d800"/>
    <rect x="76" y="84.6" width="16" height="5.6" fill="#8a8478" opacity=".7"/>
    <!-- tree -->
    <path d="M104,47 C102,42 107,38 112,37.600 L118,36.800 L118,92 L105,92 L105,85 C99,83 96.600,78 99,72 C96,67 97.600,59 101,56 C99.600,52 101,49 104,47Z" fill="url(#tree)"/>
    <g filter="url(#lf)">
     <ellipse cx="111" cy="47" rx="6" ry="7" fill="#8cab66" opacity=".8"/>
     <ellipse cx="103.500" cy="61" rx="4" ry="6" fill="#86a660" opacity=".8"/>
     <ellipse cx="114" cy="62" rx="4" ry="8" fill="#557a3c" opacity=".8"/>
     <ellipse cx="102" cy="75" rx="4" ry="5" fill="#7e9e58" opacity=".8"/>
     <ellipse cx="109" cy="71" rx="3" ry="6" fill="#4c6e36" opacity=".75"/>
     <ellipse cx="99" cy="68" rx="2.400" ry="3" fill="#7d9d5a" opacity=".7"/>
     <ellipse cx="100" cy="81" rx="3" ry="2.400" fill="#6c8c4c" opacity=".7"/>
    </g>
    <polygon points="106,83 118,80 118,92 106,92" fill="#2d3622"/>
    <rect x="104.800" y="79" width="5.200" height="3.800" rx="1.600" fill="#d8c616"/>
    <rect x="110.600" y="84" width="1" height="8" fill="#8d968c"/><rect x="114.600" y="84" width="1" height="8" fill="#8d968c"/>
    <!-- ground + people -->
    <rect x="0" y="90.4" width="118" height="2.6" fill="#cbc6bd"/>
    <rect x="2" y="83" width="9" height="8" fill="#b7b4b0"/>
    <rect x="3.4" y="81" width="1.8" height="8" fill="#8a7f7a"/><rect x="6.6" y="80.6" width="1.8" height="5" fill="#c9c4c0"/><rect x="9.4" y="82" width="1.8" height="5" fill="#e0cdb8"/>
    <ellipse cx="8.6" cy="89.4" rx="2.6" ry="2" fill="#2d2a30"/>
    <rect x="24" y="82.4" width="1.8" height="6.6" fill="#c7c9cc"/><rect x="22.4" y="88" width="6" height="2.4" fill="#26282c"/>
   </g>
   </g>
</svg></div>
  <div class="abs thumb" style="left:555px;top:186px"><svg viewBox="0 0 118 92.5" preserveAspectRatio="none">
   <g clip-path="url(#pc)">
   <rect width="118" height="93" fill="url(#sky)"/>
   <g filter="url(#soft)">
    <!-- clouds -->
    <g filter="url(#cl)"><ellipse cx="52" cy="9" rx="17" ry="5" fill="#d3def2" opacity=".85"/><ellipse cx="76" cy="9" rx="19" ry="7" fill="#d6e0f2" opacity=".9"/><ellipse cx="44" cy="23" rx="13" ry="5" fill="#bccfec" opacity=".8"/><ellipse cx="62" cy="17" rx="10" ry="4" fill="#c6d5ee" opacity=".7"/></g>
    <!-- brick building -->
    <polygon points="0,46 34,32 56,23 72,14 99,6.8 112,0 118,0 118,60 0,60" fill="#b85a45"/>
    <polygon points="0,46 34,32 56,23 72,14 99,6.8 112,0 112,2 99,8.6 72,15.8 56,24.6 34,33.6 0,47.6" fill="#7a4638"/>
    <polygon points="112,0 118,0 118,30 112,26" fill="#8c5038"/>
    <rect x="114.3" y="3" width="3.7" height="7" fill="#b7a488"/><rect x="114.3" y="13" width="3.7" height="4" fill="#d4ccc0"/><rect x="114.5" y="18" width="3.5" height="8" fill="#4a3d35"/>
    <ellipse cx="105" cy="3.6" rx="6" ry="3.2" fill="#b8c2c8"/>
    <polygon points="99.5,5 105,0.3 111,0.3 111,3" fill="#a9b6bd"/>
    <ellipse cx="75" cy="15.5" rx="3.6" ry="2.6" fill="#5a4038"/>
    <ellipse cx="62" cy="20.5" rx="3.2" ry="2" fill="#6a5048"/>
    <rect x="105" y="8.6" width="3.2" height="5.4" fill="#4a3d3d"/>
    <rect x="88.6" y="14" width="3" height="3.4" fill="#5a3c34"/>
    <rect x="74" y="17.6" width="3.4" height="4.4" fill="#8c6a58"/>
    <rect x="68" y="21.4" width="2.6" height="3" fill="#5a3c34"/>
    <rect x="89" y="27" width="3" height="5" fill="#6a3d32"/>
    <rect x="107" y="18.6" width="2.4" height="3" fill="#6a3d32"/>
    <!-- yellow tower -->
    <polygon points="11,23 17,19.800 33.600,25.600 33.200,37.400 24,43 14,45.400 8.600,46" fill="#efd200"/>
    <polygon points="17.800,22.600 22.600,24 22.600,29.400 17.800,28.600" fill="#5e4440"/>
    <polygon points="28,26.600 31.600,27.800 31.600,32.400 28,31.800" fill="#5e4440"/>
    <polygon points="17.800,32 22.400,32.800 22.400,38.200 17.800,41" fill="#66503e"/>
    <polygon points="28,35 31.400,35.400 31.200,37.400 28,39.400" fill="#66503e"/>
    <polygon points="12.200,27.400 15,25.800 15,30.600 11.800,32" fill="#7c6c30"/>
    <polygon points="11.600,35.400 15,34 15,42 10.800,43.400" fill="#7c6c30"/>
    <path d="M17.800 22.600l4.800 6.800M22.600 24l-4.800 4.600M28 26.600l3.600 5.800M31.600 27.800l-3.600 4M17.800 32l4.600 6.200M22.400 32.800l-4.600 8.200M12.200 27.400l2.800 3.200M11.600 35.400l3.400 6.600" stroke="#e8cc0c" stroke-width=".9" fill="none"/>
    <rect x="23.200" y="24" width="4.200" height="19" fill="#f6dc08"/>
    <ellipse cx="13.600" cy="22.600" rx="1.600" ry="1.800" fill="#3a4f8a"/>
    <!-- grey facade base -->
    <polygon points="0,47.6 8,46 24,43 36,41 60,38 94,33 118,38 118,93 0,93" fill="#9ca5ac"/>
    <!-- brick visible below main beam -->
    <polygon points="68,30 94,21 94,44 68,43" fill="#b35c47"/><polygon points="42.700,39 60,33 60,45 42.700,46" fill="#b05e4a"/><polygon points="24,46 37,41.600 37,47 24,48" fill="#a86452"/>
    <polygon points="67.7,37.6 77.5,38.6 77.5,43 67.7,42" fill="#b65a44"/>
    <polygon points="103,17 118,28 118,40 103,34" fill="#b65a44"/>
    
    <!-- beam undersides (dark) -->
    <polygon points="24,46.200 62,33.800 93.800,24.600 93.800,27 62,36.600 30,47.400" fill="#474c52"/>
    <polygon points="66,35 92,44.6 92,47 66,37.6" fill="#40454b"/>
    <polygon points="103,25 118,34.6 118,38 103,28" fill="#3c4147"/>
    <!-- second beam (receding) -->
    <polygon points="67.6,31.6 94.4,38.6 94.4,43 66,35" fill="#b9c0c7"/>
    <polygon points="43,36.6 60,40.6 60,44 43,39.6" fill="#aeb6bd"/>
    <polygon points="104,33.6 117.8,38.6 117.8,41 104,38" fill="#c2c8ce"/>
    <!-- main beam with letters -->
    <polygon points="22.700,42.400 62,27.200 93.800,15.600 93.800,24.600 62,33.800 24,46.200" fill="#b0b8c1"/>
    <g fill="#667284">
     <polygon points="26,42.600 27.400,42.100 27.600,44.200 26.200,44.700"/><polygon points="29,41.500 30.400,41 30.600,43.200 29.200,43.700"/><polygon points="32,40.300 33.400,39.800 33.600,42.200 32.200,42.700"/><polygon points="35,39.200 36.400,38.700 36.600,41.200 35.200,41.700"/>
     <polygon points="39.500,37.300 41,36.800 41.200,39.600 39.700,40.100"/><polygon points="42.600,36.100 44.100,35.600 44.300,38.600 42.800,39.100"/><polygon points="45.700,34.900 47.200,34.400 47.400,37.500 45.900,38"/><polygon points="48.800,33.700 50.300,33.200 50.500,36.500 49,37"/><polygon points="51.900,32.500 53.400,32 53.600,35.500 52.100,36"/><polygon points="55,31.300 56.500,30.800 56.700,34.500 55.200,35"/>
     <polygon points="60.600,29.400 61.800,29 62,32.600 60.800,33"/>
     <polygon points="66,26.800 68.800,25.800 69,30.800 66.200,31.700"/><polygon points="70.600,25.100 73.400,24.100 73.600,29.300 70.800,30.200"/><polygon points="75.200,23.400 78,22.400 78.200,27.800 75.400,28.700"/><polygon points="79.800,21.700 82.600,20.700 82.800,26.300 80,27.200"/><polygon points="84.400,20 87.200,19 87.400,24.800 84.600,25.700"/><polygon points="89,18.300 91.800,17.300 92,23.300 89.200,24.200"/>
    </g>
    <!-- right diagonal beam -->
    <polygon points="102.9,17.8 117.8,28.2 117.8,34.7 102.9,25" fill="#b4bcc3"/>
    <!-- left wall -->
    <rect x="0" y="47.6" width="8.4" height="44" fill="#939ca3"/>
    <rect x="0.6" y="55" width="7" height="1.4" fill="#4e565e"/>
    <rect x="1.6" y="57" width="0.8" height="30" fill="#aab2b8"/><rect x="4.6" y="57" width="0.8" height="30" fill="#aab2b8"/>
    <!-- glass upper areas -->
    <polygon points="24.7,47 36.4,49 36.4,56 24.7,57.5" fill="#4b5359"/>
    <rect x="51.4" y="49.6" width="8.6" height="6.4" fill="#30363b"/>
    <polygon points="43,57 60,59 60,70 43,68.4" fill="#3d444b"/>
    <rect x="44.2" y="57.4" width="1" height="11.4" fill="#9aa3a9"/><rect x="51" y="58" width="1.2" height="11.4" fill="#8e979d"/><rect x="56" y="58.6" width="1" height="11.2" fill="#8e979d"/>
    <rect x="46" y="60" width="4.6" height="8" fill="#252a2f"/>
    <polygon points="70.3,47.6 89.2,45.6 89.2,72 70.3,71" fill="#2b3137"/>
    <g stroke="#7f8990" stroke-width="0.7"><line x1="70.3" y1="51" x2="89.2" y2="49.4"/><line x1="70.3" y1="54.4" x2="89.2" y2="53.2"/><line x1="70.3" y1="57.8" x2="89.2" y2="57"/><line x1="70.3" y1="61.2" x2="89.2" y2="60.8"/><line x1="70.3" y1="64.6" x2="89.2" y2="64.6"/><line x1="70.3" y1="68" x2="89.2" y2="68.4"/></g>
    <rect x="82" y="62.4" width="4" height="9.6" fill="none" stroke="#aab3b9" stroke-width="0.8"/>
    <!-- orange -->
    <rect x="8.4" y="48" width="3" height="11" fill="#d9a05a"/>
    <polygon points="12,47.4 14.2,47 14.2,58 12,58.4" fill="#f08c10"/>
    <polygon points="16.2,46.4 20.5,45.6 20.5,57.2 16.2,57.8" fill="#f08c10"/>
    <polygon points="8.1,59 28,56.4 36.1,55.4 36.1,60 28.6,61 28.6,67.1 59.8,70.1 59.8,73 28,70.7 28,72.7 7.8,73.6" fill="#ef8a0e"/>
    <polygon points="8.4,70.7 24.7,69.7 24.7,71.3 8.4,72.3" fill="#f8e6cc"/>
    <polygon points="29.2,61.6 35.6,60.8 35.6,66.6 29.2,66.2" fill="#5d6a70"/>
    <polygon points="42.9,54.8 59.8,57 59.8,59 42.9,56.8" fill="#ee8c14"/>
    <polygon points="56,69.8 60,70.2 60,73.2 56,72.8" fill="#ef8a0e"/>
    <polygon points="67,71 89.9,73.6 89.9,76.4 67,74" fill="#ee8c14"/>
    <!-- ground floor glass -->
    <polygon points="9.700,74.200 28,73.200 59.800,73.400 59.800,90.600 9.700,90.600" fill="#8d9896"/>
    <rect x="11" y="76" width="4" height="9" fill="#596762"/>
    <rect x="18" y="75" width="9" height="14" fill="#74817e"/>
    <rect x="37.600" y="73.400" width="6.400" height="17" fill="#414a4c"/>
    <rect x="39.6" y="79" width="4" height="3.4" fill="#a89a22"/>
    <rect x="52" y="74" width="3" height="16.600" fill="#3a4245"/>
    <rect x="57.4" y="74" width="1.6" height="16.6" fill="#2c3336"/>
    <rect x="28.4" y="78" width="5" height="12.6" fill="none" stroke="#a9b1b4" stroke-width="0.8"/>
    <rect x="45.4" y="73.4" width="3.2" height="17.2" fill="#8f999c"/>
    <polygon points="67,74.300 90,76.600 90,90.600 67,90.600" fill="#4d5559"/>
    <rect x="69.6" y="75" width="1.6" height="15.6" fill="#98a1a5"/><rect x="74" y="75.6" width="1.4" height="15" fill="#98a1a5"/><rect x="78.6" y="76" width="1.4" height="14.6" fill="#8c9599"/><rect x="83.6" y="76.4" width="2.4" height="14.2" fill="#7c868b"/>
    <!-- columns -->
    <polygon points="37,41 42.7,39.6 42.7,73 37,72.4" fill="#a5aeb5"/>
    <rect x="60" y="33.5" width="8.2" height="57.6" fill="#b0b8bf"/>
    <rect x="60" y="33.5" width="1.6" height="57.6" fill="#969fa7"/>
    <polygon points="91,20 94.4,16 102.9,15.9 103,91 90.4,91" fill="#b5bdc4"/>
    <polygon points="91,20 94.4,16 94.4,91 90.4,91" fill="#9da6ad"/>
    <rect x="96" y="60" width="8" height="31" fill="#a3acb4"/>
    <!-- umbrellas -->
    <polygon points="74.2,81.6 79.6,78.2 85.3,80.6 84,82.4 75.6,82.4" fill="#f2d400"/>
    <polygon points="81.4,83 89,77.9 95,81.6 93.6,84 83,84.4" fill="#f5d800"/>
    <rect x="76" y="84.6" width="16" height="5.6" fill="#8a8478" opacity=".7"/>
    <!-- tree -->
    <path d="M104,47 C102,42 107,38 112,37.600 L118,36.800 L118,92 L105,92 L105,85 C99,83 96.600,78 99,72 C96,67 97.600,59 101,56 C99.600,52 101,49 104,47Z" fill="url(#tree)"/>
    <g filter="url(#lf)">
     <ellipse cx="111" cy="47" rx="6" ry="7" fill="#8cab66" opacity=".8"/>
     <ellipse cx="103.500" cy="61" rx="4" ry="6" fill="#86a660" opacity=".8"/>
     <ellipse cx="114" cy="62" rx="4" ry="8" fill="#557a3c" opacity=".8"/>
     <ellipse cx="102" cy="75" rx="4" ry="5" fill="#7e9e58" opacity=".8"/>
     <ellipse cx="109" cy="71" rx="3" ry="6" fill="#4c6e36" opacity=".75"/>
     <ellipse cx="99" cy="68" rx="2.400" ry="3" fill="#7d9d5a" opacity=".7"/>
     <ellipse cx="100" cy="81" rx="3" ry="2.400" fill="#6c8c4c" opacity=".7"/>
    </g>
    <polygon points="106,83 118,80 118,92 106,92" fill="#2d3622"/>
    <rect x="104.800" y="79" width="5.200" height="3.800" rx="1.600" fill="#d8c616"/>
    <rect x="110.600" y="84" width="1" height="8" fill="#8d968c"/><rect x="114.600" y="84" width="1" height="8" fill="#8d968c"/>
    <!-- ground + people -->
    <rect x="0" y="90.4" width="118" height="2.6" fill="#cbc6bd"/>
    <rect x="2" y="83" width="9" height="8" fill="#b7b4b0"/>
    <rect x="3.4" y="81" width="1.8" height="8" fill="#8a7f7a"/><rect x="6.6" y="80.6" width="1.8" height="5" fill="#c9c4c0"/><rect x="9.4" y="82" width="1.8" height="5" fill="#e0cdb8"/>
    <ellipse cx="8.6" cy="89.4" rx="2.6" ry="2" fill="#2d2a30"/>
    <rect x="24" y="82.4" width="1.8" height="6.6" fill="#c7c9cc"/><rect x="22.4" y="88" width="6" height="2.4" fill="#26282c"/>
   </g>
   </g>
</svg></div>
  <div class="abs thumb" style="left:690px;top:186px"><svg viewBox="0 0 118 92.5" preserveAspectRatio="none">
   <g clip-path="url(#pc)">
   <rect width="118" height="93" fill="url(#sky)"/>
   <g filter="url(#soft)">
    <!-- clouds -->
    <g filter="url(#cl)"><ellipse cx="52" cy="9" rx="17" ry="5" fill="#d3def2" opacity=".85"/><ellipse cx="76" cy="9" rx="19" ry="7" fill="#d6e0f2" opacity=".9"/><ellipse cx="44" cy="23" rx="13" ry="5" fill="#bccfec" opacity=".8"/><ellipse cx="62" cy="17" rx="10" ry="4" fill="#c6d5ee" opacity=".7"/></g>
    <!-- brick building -->
    <polygon points="0,46 34,32 56,23 72,14 99,6.8 112,0 118,0 118,60 0,60" fill="#b85a45"/>
    <polygon points="0,46 34,32 56,23 72,14 99,6.8 112,0 112,2 99,8.6 72,15.8 56,24.6 34,33.6 0,47.6" fill="#7a4638"/>
    <polygon points="112,0 118,0 118,30 112,26" fill="#8c5038"/>
    <rect x="114.3" y="3" width="3.7" height="7" fill="#b7a488"/><rect x="114.3" y="13" width="3.7" height="4" fill="#d4ccc0"/><rect x="114.5" y="18" width="3.5" height="8" fill="#4a3d35"/>
    <ellipse cx="105" cy="3.6" rx="6" ry="3.2" fill="#b8c2c8"/>
    <polygon points="99.5,5 105,0.3 111,0.3 111,3" fill="#a9b6bd"/>
    <ellipse cx="75" cy="15.5" rx="3.6" ry="2.6" fill="#5a4038"/>
    <ellipse cx="62" cy="20.5" rx="3.2" ry="2" fill="#6a5048"/>
    <rect x="105" y="8.6" width="3.2" height="5.4" fill="#4a3d3d"/>
    <rect x="88.6" y="14" width="3" height="3.4" fill="#5a3c34"/>
    <rect x="74" y="17.6" width="3.4" height="4.4" fill="#8c6a58"/>
    <rect x="68" y="21.4" width="2.6" height="3" fill="#5a3c34"/>
    <rect x="89" y="27" width="3" height="5" fill="#6a3d32"/>
    <rect x="107" y="18.6" width="2.4" height="3" fill="#6a3d32"/>
    <!-- yellow tower -->
    <polygon points="11,23 17,19.800 33.600,25.600 33.200,37.400 24,43 14,45.400 8.600,46" fill="#efd200"/>
    <polygon points="17.800,22.600 22.600,24 22.600,29.400 17.800,28.600" fill="#5e4440"/>
    <polygon points="28,26.600 31.600,27.800 31.600,32.400 28,31.800" fill="#5e4440"/>
    <polygon points="17.800,32 22.400,32.800 22.400,38.200 17.800,41" fill="#66503e"/>
    <polygon points="28,35 31.400,35.400 31.200,37.400 28,39.400" fill="#66503e"/>
    <polygon points="12.200,27.400 15,25.800 15,30.600 11.800,32" fill="#7c6c30"/>
    <polygon points="11.600,35.400 15,34 15,42 10.800,43.400" fill="#7c6c30"/>
    <path d="M17.800 22.600l4.800 6.800M22.600 24l-4.800 4.600M28 26.600l3.600 5.800M31.600 27.800l-3.600 4M17.800 32l4.600 6.200M22.400 32.800l-4.600 8.200M12.200 27.400l2.800 3.200M11.600 35.400l3.400 6.600" stroke="#e8cc0c" stroke-width=".9" fill="none"/>
    <rect x="23.200" y="24" width="4.200" height="19" fill="#f6dc08"/>
    <ellipse cx="13.600" cy="22.600" rx="1.600" ry="1.800" fill="#3a4f8a"/>
    <!-- grey facade base -->
    <polygon points="0,47.6 8,46 24,43 36,41 60,38 94,33 118,38 118,93 0,93" fill="#9ca5ac"/>
    <!-- brick visible below main beam -->
    <polygon points="68,30 94,21 94,44 68,43" fill="#b35c47"/><polygon points="42.700,39 60,33 60,45 42.700,46" fill="#b05e4a"/><polygon points="24,46 37,41.600 37,47 24,48" fill="#a86452"/>
    <polygon points="67.7,37.6 77.5,38.6 77.5,43 67.7,42" fill="#b65a44"/>
    <polygon points="103,17 118,28 118,40 103,34" fill="#b65a44"/>
    
    <!-- beam undersides (dark) -->
    <polygon points="24,46.200 62,33.800 93.800,24.600 93.800,27 62,36.600 30,47.400" fill="#474c52"/>
    <polygon points="66,35 92,44.6 92,47 66,37.6" fill="#40454b"/>
    <polygon points="103,25 118,34.6 118,38 103,28" fill="#3c4147"/>
    <!-- second beam (receding) -->
    <polygon points="67.6,31.6 94.4,38.6 94.4,43 66,35" fill="#b9c0c7"/>
    <polygon points="43,36.6 60,40.6 60,44 43,39.6" fill="#aeb6bd"/>
    <polygon points="104,33.6 117.8,38.6 117.8,41 104,38" fill="#c2c8ce"/>
    <!-- main beam with letters -->
    <polygon points="22.700,42.400 62,27.200 93.800,15.600 93.800,24.600 62,33.800 24,46.200" fill="#b0b8c1"/>
    <g fill="#667284">
     <polygon points="26,42.600 27.400,42.100 27.600,44.200 26.200,44.700"/><polygon points="29,41.500 30.400,41 30.600,43.200 29.200,43.700"/><polygon points="32,40.300 33.400,39.800 33.600,42.200 32.200,42.700"/><polygon points="35,39.200 36.400,38.700 36.600,41.200 35.200,41.700"/>
     <polygon points="39.500,37.300 41,36.800 41.200,39.600 39.700,40.100"/><polygon points="42.600,36.100 44.100,35.600 44.300,38.600 42.800,39.100"/><polygon points="45.700,34.900 47.200,34.400 47.400,37.500 45.900,38"/><polygon points="48.800,33.700 50.300,33.200 50.500,36.500 49,37"/><polygon points="51.900,32.500 53.400,32 53.600,35.500 52.100,36"/><polygon points="55,31.300 56.500,30.800 56.700,34.500 55.200,35"/>
     <polygon points="60.600,29.400 61.800,29 62,32.600 60.800,33"/>
     <polygon points="66,26.800 68.800,25.800 69,30.800 66.200,31.700"/><polygon points="70.600,25.100 73.400,24.100 73.600,29.300 70.800,30.200"/><polygon points="75.200,23.400 78,22.400 78.200,27.800 75.400,28.700"/><polygon points="79.800,21.700 82.600,20.700 82.800,26.300 80,27.200"/><polygon points="84.400,20 87.200,19 87.400,24.800 84.600,25.700"/><polygon points="89,18.300 91.800,17.300 92,23.300 89.200,24.200"/>
    </g>
    <!-- right diagonal beam -->
    <polygon points="102.9,17.8 117.8,28.2 117.8,34.7 102.9,25" fill="#b4bcc3"/>
    <!-- left wall -->
    <rect x="0" y="47.6" width="8.4" height="44" fill="#939ca3"/>
    <rect x="0.6" y="55" width="7" height="1.4" fill="#4e565e"/>
    <rect x="1.6" y="57" width="0.8" height="30" fill="#aab2b8"/><rect x="4.6" y="57" width="0.8" height="30" fill="#aab2b8"/>
    <!-- glass upper areas -->
    <polygon points="24.7,47 36.4,49 36.4,56 24.7,57.5" fill="#4b5359"/>
    <rect x="51.4" y="49.6" width="8.6" height="6.4" fill="#30363b"/>
    <polygon points="43,57 60,59 60,70 43,68.4" fill="#3d444b"/>
    <rect x="44.2" y="57.4" width="1" height="11.4" fill="#9aa3a9"/><rect x="51" y="58" width="1.2" height="11.4" fill="#8e979d"/><rect x="56" y="58.6" width="1" height="11.2" fill="#8e979d"/>
    <rect x="46" y="60" width="4.6" height="8" fill="#252a2f"/>
    <polygon points="70.3,47.6 89.2,45.6 89.2,72 70.3,71" fill="#2b3137"/>
    <g stroke="#7f8990" stroke-width="0.7"><line x1="70.3" y1="51" x2="89.2" y2="49.4"/><line x1="70.3" y1="54.4" x2="89.2" y2="53.2"/><line x1="70.3" y1="57.8" x2="89.2" y2="57"/><line x1="70.3" y1="61.2" x2="89.2" y2="60.8"/><line x1="70.3" y1="64.6" x2="89.2" y2="64.6"/><line x1="70.3" y1="68" x2="89.2" y2="68.4"/></g>
    <rect x="82" y="62.4" width="4" height="9.6" fill="none" stroke="#aab3b9" stroke-width="0.8"/>
    <!-- orange -->
    <rect x="8.4" y="48" width="3" height="11" fill="#d9a05a"/>
    <polygon points="12,47.4 14.2,47 14.2,58 12,58.4" fill="#f08c10"/>
    <polygon points="16.2,46.4 20.5,45.6 20.5,57.2 16.2,57.8" fill="#f08c10"/>
    <polygon points="8.1,59 28,56.4 36.1,55.4 36.1,60 28.6,61 28.6,67.1 59.8,70.1 59.8,73 28,70.7 28,72.7 7.8,73.6" fill="#ef8a0e"/>
    <polygon points="8.4,70.7 24.7,69.7 24.7,71.3 8.4,72.3" fill="#f8e6cc"/>
    <polygon points="29.2,61.6 35.6,60.8 35.6,66.6 29.2,66.2" fill="#5d6a70"/>
    <polygon points="42.9,54.8 59.8,57 59.8,59 42.9,56.8" fill="#ee8c14"/>
    <polygon points="56,69.8 60,70.2 60,73.2 56,72.8" fill="#ef8a0e"/>
    <polygon points="67,71 89.9,73.6 89.9,76.4 67,74" fill="#ee8c14"/>
    <!-- ground floor glass -->
    <polygon points="9.700,74.200 28,73.200 59.800,73.400 59.800,90.600 9.700,90.600" fill="#8d9896"/>
    <rect x="11" y="76" width="4" height="9" fill="#596762"/>
    <rect x="18" y="75" width="9" height="14" fill="#74817e"/>
    <rect x="37.600" y="73.400" width="6.400" height="17" fill="#414a4c"/>
    <rect x="39.6" y="79" width="4" height="3.4" fill="#a89a22"/>
    <rect x="52" y="74" width="3" height="16.600" fill="#3a4245"/>
    <rect x="57.4" y="74" width="1.6" height="16.6" fill="#2c3336"/>
    <rect x="28.4" y="78" width="5" height="12.6" fill="none" stroke="#a9b1b4" stroke-width="0.8"/>
    <rect x="45.4" y="73.4" width="3.2" height="17.2" fill="#8f999c"/>
    <polygon points="67,74.300 90,76.600 90,90.600 67,90.600" fill="#4d5559"/>
    <rect x="69.6" y="75" width="1.6" height="15.6" fill="#98a1a5"/><rect x="74" y="75.6" width="1.4" height="15" fill="#98a1a5"/><rect x="78.6" y="76" width="1.4" height="14.6" fill="#8c9599"/><rect x="83.6" y="76.4" width="2.4" height="14.2" fill="#7c868b"/>
    <!-- columns -->
    <polygon points="37,41 42.7,39.6 42.7,73 37,72.4" fill="#a5aeb5"/>
    <rect x="60" y="33.5" width="8.2" height="57.6" fill="#b0b8bf"/>
    <rect x="60" y="33.5" width="1.6" height="57.6" fill="#969fa7"/>
    <polygon points="91,20 94.4,16 102.9,15.9 103,91 90.4,91" fill="#b5bdc4"/>
    <polygon points="91,20 94.4,16 94.4,91 90.4,91" fill="#9da6ad"/>
    <rect x="96" y="60" width="8" height="31" fill="#a3acb4"/>
    <!-- umbrellas -->
    <polygon points="74.2,81.6 79.6,78.2 85.3,80.6 84,82.4 75.6,82.4" fill="#f2d400"/>
    <polygon points="81.4,83 89,77.9 95,81.6 93.6,84 83,84.4" fill="#f5d800"/>
    <rect x="76" y="84.6" width="16" height="5.6" fill="#8a8478" opacity=".7"/>
    <!-- tree -->
    <path d="M104,47 C102,42 107,38 112,37.600 L118,36.800 L118,92 L105,92 L105,85 C99,83 96.600,78 99,72 C96,67 97.600,59 101,56 C99.600,52 101,49 104,47Z" fill="url(#tree)"/>
    <g filter="url(#lf)">
     <ellipse cx="111" cy="47" rx="6" ry="7" fill="#8cab66" opacity=".8"/>
     <ellipse cx="103.500" cy="61" rx="4" ry="6" fill="#86a660" opacity=".8"/>
     <ellipse cx="114" cy="62" rx="4" ry="8" fill="#557a3c" opacity=".8"/>
     <ellipse cx="102" cy="75" rx="4" ry="5" fill="#7e9e58" opacity=".8"/>
     <ellipse cx="109" cy="71" rx="3" ry="6" fill="#4c6e36" opacity=".75"/>
     <ellipse cx="99" cy="68" rx="2.400" ry="3" fill="#7d9d5a" opacity=".7"/>
     <ellipse cx="100" cy="81" rx="3" ry="2.400" fill="#6c8c4c" opacity=".7"/>
    </g>
    <polygon points="106,83 118,80 118,92 106,92" fill="#2d3622"/>
    <rect x="104.800" y="79" width="5.200" height="3.800" rx="1.600" fill="#d8c616"/>
    <rect x="110.600" y="84" width="1" height="8" fill="#8d968c"/><rect x="114.600" y="84" width="1" height="8" fill="#8d968c"/>
    <!-- ground + people -->
    <rect x="0" y="90.4" width="118" height="2.6" fill="#cbc6bd"/>
    <rect x="2" y="83" width="9" height="8" fill="#b7b4b0"/>
    <rect x="3.4" y="81" width="1.8" height="8" fill="#8a7f7a"/><rect x="6.6" y="80.6" width="1.8" height="5" fill="#c9c4c0"/><rect x="9.4" y="82" width="1.8" height="5" fill="#e0cdb8"/>
    <ellipse cx="8.6" cy="89.4" rx="2.6" ry="2" fill="#2d2a30"/>
    <rect x="24" y="82.4" width="1.8" height="6.6" fill="#c7c9cc"/><rect x="22.4" y="88" width="6" height="2.4" fill="#26282c"/>
   </g>
   </g>
</svg></div>
  <div class="abs thumb" style="left:826px;top:186px"><svg viewBox="0 0 118 92.5" preserveAspectRatio="none">
   <g clip-path="url(#pc)">
   <rect width="118" height="93" fill="url(#sky)"/>
   <g filter="url(#soft)">
    <!-- clouds -->
    <g filter="url(#cl)"><ellipse cx="52" cy="9" rx="17" ry="5" fill="#d3def2" opacity=".85"/><ellipse cx="76" cy="9" rx="19" ry="7" fill="#d6e0f2" opacity=".9"/><ellipse cx="44" cy="23" rx="13" ry="5" fill="#bccfec" opacity=".8"/><ellipse cx="62" cy="17" rx="10" ry="4" fill="#c6d5ee" opacity=".7"/></g>
    <!-- brick building -->
    <polygon points="0,46 34,32 56,23 72,14 99,6.8 112,0 118,0 118,60 0,60" fill="#b85a45"/>
    <polygon points="0,46 34,32 56,23 72,14 99,6.8 112,0 112,2 99,8.6 72,15.8 56,24.6 34,33.6 0,47.6" fill="#7a4638"/>
    <polygon points="112,0 118,0 118,30 112,26" fill="#8c5038"/>
    <rect x="114.3" y="3" width="3.7" height="7" fill="#b7a488"/><rect x="114.3" y="13" width="3.7" height="4" fill="#d4ccc0"/><rect x="114.5" y="18" width="3.5" height="8" fill="#4a3d35"/>
    <ellipse cx="105" cy="3.6" rx="6" ry="3.2" fill="#b8c2c8"/>
    <polygon points="99.5,5 105,0.3 111,0.3 111,3" fill="#a9b6bd"/>
    <ellipse cx="75" cy="15.5" rx="3.6" ry="2.6" fill="#5a4038"/>
    <ellipse cx="62" cy="20.5" rx="3.2" ry="2" fill="#6a5048"/>
    <rect x="105" y="8.6" width="3.2" height="5.4" fill="#4a3d3d"/>
    <rect x="88.6" y="14" width="3" height="3.4" fill="#5a3c34"/>
    <rect x="74" y="17.6" width="3.4" height="4.4" fill="#8c6a58"/>
    <rect x="68" y="21.4" width="2.6" height="3" fill="#5a3c34"/>
    <rect x="89" y="27" width="3" height="5" fill="#6a3d32"/>
    <rect x="107" y="18.6" width="2.4" height="3" fill="#6a3d32"/>
    <!-- yellow tower -->
    <polygon points="11,23 17,19.800 33.600,25.600 33.200,37.400 24,43 14,45.400 8.600,46" fill="#efd200"/>
    <polygon points="17.800,22.600 22.600,24 22.600,29.400 17.800,28.600" fill="#5e4440"/>
    <polygon points="28,26.600 31.600,27.800 31.600,32.400 28,31.800" fill="#5e4440"/>
    <polygon points="17.800,32 22.400,32.800 22.400,38.200 17.800,41" fill="#66503e"/>
    <polygon points="28,35 31.400,35.400 31.200,37.400 28,39.400" fill="#66503e"/>
    <polygon points="12.200,27.400 15,25.800 15,30.600 11.800,32" fill="#7c6c30"/>
    <polygon points="11.600,35.400 15,34 15,42 10.800,43.400" fill="#7c6c30"/>
    <path d="M17.800 22.600l4.800 6.800M22.600 24l-4.800 4.600M28 26.600l3.600 5.800M31.600 27.800l-3.600 4M17.800 32l4.600 6.200M22.400 32.800l-4.600 8.200M12.200 27.400l2.800 3.200M11.600 35.400l3.400 6.600" stroke="#e8cc0c" stroke-width=".9" fill="none"/>
    <rect x="23.200" y="24" width="4.200" height="19" fill="#f6dc08"/>
    <ellipse cx="13.600" cy="22.600" rx="1.600" ry="1.800" fill="#3a4f8a"/>
    <!-- grey facade base -->
    <polygon points="0,47.6 8,46 24,43 36,41 60,38 94,33 118,38 118,93 0,93" fill="#9ca5ac"/>
    <!-- brick visible below main beam -->
    <polygon points="68,30 94,21 94,44 68,43" fill="#b35c47"/><polygon points="42.700,39 60,33 60,45 42.700,46" fill="#b05e4a"/><polygon points="24,46 37,41.600 37,47 24,48" fill="#a86452"/>
    <polygon points="67.7,37.6 77.5,38.6 77.5,43 67.7,42" fill="#b65a44"/>
    <polygon points="103,17 118,28 118,40 103,34" fill="#b65a44"/>
    
    <!-- beam undersides (dark) -->
    <polygon points="24,46.200 62,33.800 93.800,24.600 93.800,27 62,36.600 30,47.400" fill="#474c52"/>
    <polygon points="66,35 92,44.6 92,47 66,37.6" fill="#40454b"/>
    <polygon points="103,25 118,34.6 118,38 103,28" fill="#3c4147"/>
    <!-- second beam (receding) -->
    <polygon points="67.6,31.6 94.4,38.6 94.4,43 66,35" fill="#b9c0c7"/>
    <polygon points="43,36.6 60,40.6 60,44 43,39.6" fill="#aeb6bd"/>
    <polygon points="104,33.6 117.8,38.6 117.8,41 104,38" fill="#c2c8ce"/>
    <!-- main beam with letters -->
    <polygon points="22.700,42.400 62,27.200 93.800,15.600 93.800,24.600 62,33.800 24,46.200" fill="#b0b8c1"/>
    <g fill="#667284">
     <polygon points="26,42.600 27.400,42.100 27.600,44.200 26.200,44.700"/><polygon points="29,41.500 30.400,41 30.600,43.200 29.200,43.700"/><polygon points="32,40.300 33.400,39.800 33.600,42.200 32.200,42.700"/><polygon points="35,39.200 36.400,38.700 36.600,41.200 35.200,41.700"/>
     <polygon points="39.500,37.300 41,36.800 41.200,39.600 39.700,40.100"/><polygon points="42.600,36.100 44.100,35.600 44.300,38.600 42.800,39.100"/><polygon points="45.700,34.900 47.200,34.400 47.400,37.500 45.900,38"/><polygon points="48.800,33.700 50.300,33.200 50.500,36.500 49,37"/><polygon points="51.900,32.500 53.400,32 53.600,35.500 52.100,36"/><polygon points="55,31.300 56.500,30.800 56.700,34.500 55.200,35"/>
     <polygon points="60.600,29.400 61.800,29 62,32.600 60.800,33"/>
     <polygon points="66,26.800 68.800,25.800 69,30.800 66.200,31.700"/><polygon points="70.600,25.100 73.400,24.100 73.600,29.300 70.800,30.200"/><polygon points="75.200,23.400 78,22.400 78.200,27.800 75.400,28.700"/><polygon points="79.800,21.700 82.600,20.700 82.800,26.300 80,27.200"/><polygon points="84.400,20 87.200,19 87.400,24.800 84.600,25.700"/><polygon points="89,18.300 91.800,17.300 92,23.300 89.200,24.200"/>
    </g>
    <!-- right diagonal beam -->
    <polygon points="102.9,17.8 117.8,28.2 117.8,34.7 102.9,25" fill="#b4bcc3"/>
    <!-- left wall -->
    <rect x="0" y="47.6" width="8.4" height="44" fill="#939ca3"/>
    <rect x="0.6" y="55" width="7" height="1.4" fill="#4e565e"/>
    <rect x="1.6" y="57" width="0.8" height="30" fill="#aab2b8"/><rect x="4.6" y="57" width="0.8" height="30" fill="#aab2b8"/>
    <!-- glass upper areas -->
    <polygon points="24.7,47 36.4,49 36.4,56 24.7,57.5" fill="#4b5359"/>
    <rect x="51.4" y="49.6" width="8.6" height="6.4" fill="#30363b"/>
    <polygon points="43,57 60,59 60,70 43,68.4" fill="#3d444b"/>
    <rect x="44.2" y="57.4" width="1" height="11.4" fill="#9aa3a9"/><rect x="51" y="58" width="1.2" height="11.4" fill="#8e979d"/><rect x="56" y="58.6" width="1" height="11.2" fill="#8e979d"/>
    <rect x="46" y="60" width="4.6" height="8" fill="#252a2f"/>
    <polygon points="70.3,47.6 89.2,45.6 89.2,72 70.3,71" fill="#2b3137"/>
    <g stroke="#7f8990" stroke-width="0.7"><line x1="70.3" y1="51" x2="89.2" y2="49.4"/><line x1="70.3" y1="54.4" x2="89.2" y2="53.2"/><line x1="70.3" y1="57.8" x2="89.2" y2="57"/><line x1="70.3" y1="61.2" x2="89.2" y2="60.8"/><line x1="70.3" y1="64.6" x2="89.2" y2="64.6"/><line x1="70.3" y1="68" x2="89.2" y2="68.4"/></g>
    <rect x="82" y="62.4" width="4" height="9.6" fill="none" stroke="#aab3b9" stroke-width="0.8"/>
    <!-- orange -->
    <rect x="8.4" y="48" width="3" height="11" fill="#d9a05a"/>
    <polygon points="12,47.4 14.2,47 14.2,58 12,58.4" fill="#f08c10"/>
    <polygon points="16.2,46.4 20.5,45.6 20.5,57.2 16.2,57.8" fill="#f08c10"/>
    <polygon points="8.1,59 28,56.4 36.1,55.4 36.1,60 28.6,61 28.6,67.1 59.8,70.1 59.8,73 28,70.7 28,72.7 7.8,73.6" fill="#ef8a0e"/>
    <polygon points="8.4,70.7 24.7,69.7 24.7,71.3 8.4,72.3" fill="#f8e6cc"/>
    <polygon points="29.2,61.6 35.6,60.8 35.6,66.6 29.2,66.2" fill="#5d6a70"/>
    <polygon points="42.9,54.8 59.8,57 59.8,59 42.9,56.8" fill="#ee8c14"/>
    <polygon points="56,69.8 60,70.2 60,73.2 56,72.8" fill="#ef8a0e"/>
    <polygon points="67,71 89.9,73.6 89.9,76.4 67,74" fill="#ee8c14"/>
    <!-- ground floor glass -->
    <polygon points="9.700,74.200 28,73.200 59.800,73.400 59.800,90.600 9.700,90.600" fill="#8d9896"/>
    <rect x="11" y="76" width="4" height="9" fill="#596762"/>
    <rect x="18" y="75" width="9" height="14" fill="#74817e"/>
    <rect x="37.600" y="73.400" width="6.400" height="17" fill="#414a4c"/>
    <rect x="39.6" y="79" width="4" height="3.4" fill="#a89a22"/>
    <rect x="52" y="74" width="3" height="16.600" fill="#3a4245"/>
    <rect x="57.4" y="74" width="1.6" height="16.6" fill="#2c3336"/>
    <rect x="28.4" y="78" width="5" height="12.6" fill="none" stroke="#a9b1b4" stroke-width="0.8"/>
    <rect x="45.4" y="73.4" width="3.2" height="17.2" fill="#8f999c"/>
    <polygon points="67,74.300 90,76.600 90,90.600 67,90.600" fill="#4d5559"/>
    <rect x="69.6" y="75" width="1.6" height="15.6" fill="#98a1a5"/><rect x="74" y="75.6" width="1.4" height="15" fill="#98a1a5"/><rect x="78.6" y="76" width="1.4" height="14.6" fill="#8c9599"/><rect x="83.6" y="76.4" width="2.4" height="14.2" fill="#7c868b"/>
    <!-- columns -->
    <polygon points="37,41 42.7,39.6 42.7,73 37,72.4" fill="#a5aeb5"/>
    <rect x="60" y="33.5" width="8.2" height="57.6" fill="#b0b8bf"/>
    <rect x="60" y="33.5" width="1.6" height="57.6" fill="#969fa7"/>
    <polygon points="91,20 94.4,16 102.9,15.9 103,91 90.4,91" fill="#b5bdc4"/>
    <polygon points="91,20 94.4,16 94.4,91 90.4,91" fill="#9da6ad"/>
    <rect x="96" y="60" width="8" height="31" fill="#a3acb4"/>
    <!-- umbrellas -->
    <polygon points="74.2,81.6 79.6,78.2 85.3,80.6 84,82.4 75.6,82.4" fill="#f2d400"/>
    <polygon points="81.4,83 89,77.9 95,81.6 93.6,84 83,84.4" fill="#f5d800"/>
    <rect x="76" y="84.6" width="16" height="5.6" fill="#8a8478" opacity=".7"/>
    <!-- tree -->
    <path d="M104,47 C102,42 107,38 112,37.600 L118,36.800 L118,92 L105,92 L105,85 C99,83 96.600,78 99,72 C96,67 97.600,59 101,56 C99.600,52 101,49 104,47Z" fill="url(#tree)"/>
    <g filter="url(#lf)">
     <ellipse cx="111" cy="47" rx="6" ry="7" fill="#8cab66" opacity=".8"/>
     <ellipse cx="103.500" cy="61" rx="4" ry="6" fill="#86a660" opacity=".8"/>
     <ellipse cx="114" cy="62" rx="4" ry="8" fill="#557a3c" opacity=".8"/>
     <ellipse cx="102" cy="75" rx="4" ry="5" fill="#7e9e58" opacity=".8"/>
     <ellipse cx="109" cy="71" rx="3" ry="6" fill="#4c6e36" opacity=".75"/>
     <ellipse cx="99" cy="68" rx="2.400" ry="3" fill="#7d9d5a" opacity=".7"/>
     <ellipse cx="100" cy="81" rx="3" ry="2.400" fill="#6c8c4c" opacity=".7"/>
    </g>
    <polygon points="106,83 118,80 118,92 106,92" fill="#2d3622"/>
    <rect x="104.800" y="79" width="5.200" height="3.800" rx="1.600" fill="#d8c616"/>
    <rect x="110.600" y="84" width="1" height="8" fill="#8d968c"/><rect x="114.600" y="84" width="1" height="8" fill="#8d968c"/>
    <!-- ground + people -->
    <rect x="0" y="90.4" width="118" height="2.6" fill="#cbc6bd"/>
    <rect x="2" y="83" width="9" height="8" fill="#b7b4b0"/>
    <rect x="3.4" y="81" width="1.8" height="8" fill="#8a7f7a"/><rect x="6.6" y="80.6" width="1.8" height="5" fill="#c9c4c0"/><rect x="9.4" y="82" width="1.8" height="5" fill="#e0cdb8"/>
    <ellipse cx="8.6" cy="89.4" rx="2.6" ry="2" fill="#2d2a30"/>
    <rect x="24" y="82.4" width="1.8" height="6.6" fill="#c7c9cc"/><rect x="22.4" y="88" width="6" height="2.4" fill="#26282c"/>
   </g>
   </g>
</svg></div>
  <div class="abs thumb" style="left:555px;top:301px"><svg viewBox="0 0 118 92.5" preserveAspectRatio="none">
   <g clip-path="url(#pc)">
   <rect width="118" height="93" fill="url(#sky)"/>
   <g filter="url(#soft)">
    <!-- clouds -->
    <g filter="url(#cl)"><ellipse cx="52" cy="9" rx="17" ry="5" fill="#d3def2" opacity=".85"/><ellipse cx="76" cy="9" rx="19" ry="7" fill="#d6e0f2" opacity=".9"/><ellipse cx="44" cy="23" rx="13" ry="5" fill="#bccfec" opacity=".8"/><ellipse cx="62" cy="17" rx="10" ry="4" fill="#c6d5ee" opacity=".7"/></g>
    <!-- brick building -->
    <polygon points="0,46 34,32 56,23 72,14 99,6.8 112,0 118,0 118,60 0,60" fill="#b85a45"/>
    <polygon points="0,46 34,32 56,23 72,14 99,6.8 112,0 112,2 99,8.6 72,15.8 56,24.6 34,33.6 0,47.6" fill="#7a4638"/>
    <polygon points="112,0 118,0 118,30 112,26" fill="#8c5038"/>
    <rect x="114.3" y="3" width="3.7" height="7" fill="#b7a488"/><rect x="114.3" y="13" width="3.7" height="4" fill="#d4ccc0"/><rect x="114.5" y="18" width="3.5" height="8" fill="#4a3d35"/>
    <ellipse cx="105" cy="3.6" rx="6" ry="3.2" fill="#b8c2c8"/>
    <polygon points="99.5,5 105,0.3 111,0.3 111,3" fill="#a9b6bd"/>
    <ellipse cx="75" cy="15.5" rx="3.6" ry="2.6" fill="#5a4038"/>
    <ellipse cx="62" cy="20.5" rx="3.2" ry="2" fill="#6a5048"/>
    <rect x="105" y="8.6" width="3.2" height="5.4" fill="#4a3d3d"/>
    <rect x="88.6" y="14" width="3" height="3.4" fill="#5a3c34"/>
    <rect x="74" y="17.6" width="3.4" height="4.4" fill="#8c6a58"/>
    <rect x="68" y="21.4" width="2.6" height="3" fill="#5a3c34"/>
    <rect x="89" y="27" width="3" height="5" fill="#6a3d32"/>
    <rect x="107" y="18.6" width="2.4" height="3" fill="#6a3d32"/>
    <!-- yellow tower -->
    <polygon points="11,23 17,19.800 33.600,25.600 33.200,37.400 24,43 14,45.400 8.600,46" fill="#efd200"/>
    <polygon points="17.800,22.600 22.600,24 22.600,29.400 17.800,28.600" fill="#5e4440"/>
    <polygon points="28,26.600 31.600,27.800 31.600,32.400 28,31.800" fill="#5e4440"/>
    <polygon points="17.800,32 22.400,32.800 22.400,38.200 17.800,41" fill="#66503e"/>
    <polygon points="28,35 31.400,35.400 31.200,37.400 28,39.400" fill="#66503e"/>
    <polygon points="12.200,27.400 15,25.800 15,30.600 11.800,32" fill="#7c6c30"/>
    <polygon points="11.600,35.400 15,34 15,42 10.800,43.400" fill="#7c6c30"/>
    <path d="M17.800 22.600l4.800 6.800M22.600 24l-4.800 4.600M28 26.600l3.600 5.800M31.600 27.800l-3.600 4M17.800 32l4.600 6.200M22.400 32.800l-4.600 8.200M12.200 27.400l2.800 3.200M11.600 35.400l3.400 6.600" stroke="#e8cc0c" stroke-width=".9" fill="none"/>
    <rect x="23.200" y="24" width="4.200" height="19" fill="#f6dc08"/>
    <ellipse cx="13.600" cy="22.600" rx="1.600" ry="1.800" fill="#3a4f8a"/>
    <!-- grey facade base -->
    <polygon points="0,47.6 8,46 24,43 36,41 60,38 94,33 118,38 118,93 0,93" fill="#9ca5ac"/>
    <!-- brick visible below main beam -->
    <polygon points="68,30 94,21 94,44 68,43" fill="#b35c47"/><polygon points="42.700,39 60,33 60,45 42.700,46" fill="#b05e4a"/><polygon points="24,46 37,41.600 37,47 24,48" fill="#a86452"/>
    <polygon points="67.7,37.6 77.5,38.6 77.5,43 67.7,42" fill="#b65a44"/>
    <polygon points="103,17 118,28 118,40 103,34" fill="#b65a44"/>
    
    <!-- beam undersides (dark) -->
    <polygon points="24,46.200 62,33.800 93.800,24.600 93.800,27 62,36.600 30,47.400" fill="#474c52"/>
    <polygon points="66,35 92,44.6 92,47 66,37.6" fill="#40454b"/>
    <polygon points="103,25 118,34.6 118,38 103,28" fill="#3c4147"/>
    <!-- second beam (receding) -->
    <polygon points="67.6,31.6 94.4,38.6 94.4,43 66,35" fill="#b9c0c7"/>
    <polygon points="43,36.6 60,40.6 60,44 43,39.6" fill="#aeb6bd"/>
    <polygon points="104,33.6 117.8,38.6 117.8,41 104,38" fill="#c2c8ce"/>
    <!-- main beam with letters -->
    <polygon points="22.700,42.400 62,27.200 93.800,15.600 93.800,24.600 62,33.800 24,46.200" fill="#b0b8c1"/>
    <g fill="#667284">
     <polygon points="26,42.600 27.400,42.100 27.600,44.200 26.200,44.700"/><polygon points="29,41.500 30.400,41 30.600,43.200 29.200,43.700"/><polygon points="32,40.300 33.400,39.800 33.600,42.200 32.200,42.700"/><polygon points="35,39.200 36.400,38.700 36.600,41.200 35.200,41.700"/>
     <polygon points="39.500,37.300 41,36.800 41.200,39.600 39.700,40.100"/><polygon points="42.600,36.100 44.100,35.600 44.300,38.600 42.800,39.100"/><polygon points="45.700,34.900 47.200,34.400 47.400,37.500 45.900,38"/><polygon points="48.800,33.700 50.300,33.200 50.500,36.500 49,37"/><polygon points="51.900,32.500 53.400,32 53.600,35.500 52.100,36"/><polygon points="55,31.300 56.500,30.800 56.700,34.500 55.200,35"/>
     <polygon points="60.600,29.400 61.800,29 62,32.600 60.800,33"/>
     <polygon points="66,26.800 68.800,25.800 69,30.800 66.200,31.700"/><polygon points="70.600,25.100 73.400,24.100 73.600,29.300 70.800,30.200"/><polygon points="75.200,23.400 78,22.400 78.200,27.800 75.400,28.700"/><polygon points="79.800,21.700 82.600,20.700 82.800,26.300 80,27.200"/><polygon points="84.400,20 87.200,19 87.400,24.800 84.600,25.700"/><polygon points="89,18.300 91.800,17.300 92,23.300 89.200,24.200"/>
    </g>
    <!-- right diagonal beam -->
    <polygon points="102.9,17.8 117.8,28.2 117.8,34.7 102.9,25" fill="#b4bcc3"/>
    <!-- left wall -->
    <rect x="0" y="47.6" width="8.4" height="44" fill="#939ca3"/>
    <rect x="0.6" y="55" width="7" height="1.4" fill="#4e565e"/>
    <rect x="1.6" y="57" width="0.8" height="30" fill="#aab2b8"/><rect x="4.6" y="57" width="0.8" height="30" fill="#aab2b8"/>
    <!-- glass upper areas -->
    <polygon points="24.7,47 36.4,49 36.4,56 24.7,57.5" fill="#4b5359"/>
    <rect x="51.4" y="49.6" width="8.6" height="6.4" fill="#30363b"/>
    <polygon points="43,57 60,59 60,70 43,68.4" fill="#3d444b"/>
    <rect x="44.2" y="57.4" width="1" height="11.4" fill="#9aa3a9"/><rect x="51" y="58" width="1.2" height="11.4" fill="#8e979d"/><rect x="56" y="58.6" width="1" height="11.2" fill="#8e979d"/>
    <rect x="46" y="60" width="4.6" height="8" fill="#252a2f"/>
    <polygon points="70.3,47.6 89.2,45.6 89.2,72 70.3,71" fill="#2b3137"/>
    <g stroke="#7f8990" stroke-width="0.7"><line x1="70.3" y1="51" x2="89.2" y2="49.4"/><line x1="70.3" y1="54.4" x2="89.2" y2="53.2"/><line x1="70.3" y1="57.8" x2="89.2" y2="57"/><line x1="70.3" y1="61.2" x2="89.2" y2="60.8"/><line x1="70.3" y1="64.6" x2="89.2" y2="64.6"/><line x1="70.3" y1="68" x2="89.2" y2="68.4"/></g>
    <rect x="82" y="62.4" width="4" height="9.6" fill="none" stroke="#aab3b9" stroke-width="0.8"/>
    <!-- orange -->
    <rect x="8.4" y="48" width="3" height="11" fill="#d9a05a"/>
    <polygon points="12,47.4 14.2,47 14.2,58 12,58.4" fill="#f08c10"/>
    <polygon points="16.2,46.4 20.5,45.6 20.5,57.2 16.2,57.8" fill="#f08c10"/>
    <polygon points="8.1,59 28,56.4 36.1,55.4 36.1,60 28.6,61 28.6,67.1 59.8,70.1 59.8,73 28,70.7 28,72.7 7.8,73.6" fill="#ef8a0e"/>
    <polygon points="8.4,70.7 24.7,69.7 24.7,71.3 8.4,72.3" fill="#f8e6cc"/>
    <polygon points="29.2,61.6 35.6,60.8 35.6,66.6 29.2,66.2" fill="#5d6a70"/>
    <polygon points="42.9,54.8 59.8,57 59.8,59 42.9,56.8" fill="#ee8c14"/>
    <polygon points="56,69.8 60,70.2 60,73.2 56,72.8" fill="#ef8a0e"/>
    <polygon points="67,71 89.9,73.6 89.9,76.4 67,74" fill="#ee8c14"/>
    <!-- ground floor glass -->
    <polygon points="9.700,74.200 28,73.200 59.800,73.400 59.800,90.600 9.700,90.600" fill="#8d9896"/>
    <rect x="11" y="76" width="4" height="9" fill="#596762"/>
    <rect x="18" y="75" width="9" height="14" fill="#74817e"/>
    <rect x="37.600" y="73.400" width="6.400" height="17" fill="#414a4c"/>
    <rect x="39.6" y="79" width="4" height="3.4" fill="#a89a22"/>
    <rect x="52" y="74" width="3" height="16.600" fill="#3a4245"/>
    <rect x="57.4" y="74" width="1.6" height="16.6" fill="#2c3336"/>
    <rect x="28.4" y="78" width="5" height="12.6" fill="none" stroke="#a9b1b4" stroke-width="0.8"/>
    <rect x="45.4" y="73.4" width="3.2" height="17.2" fill="#8f999c"/>
    <polygon points="67,74.300 90,76.600 90,90.600 67,90.600" fill="#4d5559"/>
    <rect x="69.6" y="75" width="1.6" height="15.6" fill="#98a1a5"/><rect x="74" y="75.6" width="1.4" height="15" fill="#98a1a5"/><rect x="78.6" y="76" width="1.4" height="14.6" fill="#8c9599"/><rect x="83.6" y="76.4" width="2.4" height="14.2" fill="#7c868b"/>
    <!-- columns -->
    <polygon points="37,41 42.7,39.6 42.7,73 37,72.4" fill="#a5aeb5"/>
    <rect x="60" y="33.5" width="8.2" height="57.6" fill="#b0b8bf"/>
    <rect x="60" y="33.5" width="1.6" height="57.6" fill="#969fa7"/>
    <polygon points="91,20 94.4,16 102.9,15.9 103,91 90.4,91" fill="#b5bdc4"/>
    <polygon points="91,20 94.4,16 94.4,91 90.4,91" fill="#9da6ad"/>
    <rect x="96" y="60" width="8" height="31" fill="#a3acb4"/>
    <!-- umbrellas -->
    <polygon points="74.2,81.6 79.6,78.2 85.3,80.6 84,82.4 75.6,82.4" fill="#f2d400"/>
    <polygon points="81.4,83 89,77.9 95,81.6 93.6,84 83,84.4" fill="#f5d800"/>
    <rect x="76" y="84.6" width="16" height="5.6" fill="#8a8478" opacity=".7"/>
    <!-- tree -->
    <path d="M104,47 C102,42 107,38 112,37.600 L118,36.800 L118,92 L105,92 L105,85 C99,83 96.600,78 99,72 C96,67 97.600,59 101,56 C99.600,52 101,49 104,47Z" fill="url(#tree)"/>
    <g filter="url(#lf)">
     <ellipse cx="111" cy="47" rx="6" ry="7" fill="#8cab66" opacity=".8"/>
     <ellipse cx="103.500" cy="61" rx="4" ry="6" fill="#86a660" opacity=".8"/>
     <ellipse cx="114" cy="62" rx="4" ry="8" fill="#557a3c" opacity=".8"/>
     <ellipse cx="102" cy="75" rx="4" ry="5" fill="#7e9e58" opacity=".8"/>
     <ellipse cx="109" cy="71" rx="3" ry="6" fill="#4c6e36" opacity=".75"/>
     <ellipse cx="99" cy="68" rx="2.400" ry="3" fill="#7d9d5a" opacity=".7"/>
     <ellipse cx="100" cy="81" rx="3" ry="2.400" fill="#6c8c4c" opacity=".7"/>
    </g>
    <polygon points="106,83 118,80 118,92 106,92" fill="#2d3622"/>
    <rect x="104.800" y="79" width="5.200" height="3.800" rx="1.600" fill="#d8c616"/>
    <rect x="110.600" y="84" width="1" height="8" fill="#8d968c"/><rect x="114.600" y="84" width="1" height="8" fill="#8d968c"/>
    <!-- ground + people -->
    <rect x="0" y="90.4" width="118" height="2.6" fill="#cbc6bd"/>
    <rect x="2" y="83" width="9" height="8" fill="#b7b4b0"/>
    <rect x="3.4" y="81" width="1.8" height="8" fill="#8a7f7a"/><rect x="6.6" y="80.6" width="1.8" height="5" fill="#c9c4c0"/><rect x="9.4" y="82" width="1.8" height="5" fill="#e0cdb8"/>
    <ellipse cx="8.6" cy="89.4" rx="2.6" ry="2" fill="#2d2a30"/>
    <rect x="24" y="82.4" width="1.8" height="6.6" fill="#c7c9cc"/><rect x="22.4" y="88" width="6" height="2.4" fill="#26282c"/>
   </g>
   </g>
</svg></div>
  <div class="abs thumb" style="left:690px;top:301px"><svg viewBox="0 0 118 92.5" preserveAspectRatio="none">
   <g clip-path="url(#pc)">
   <rect width="118" height="93" fill="url(#sky)"/>
   <g filter="url(#soft)">
    <!-- clouds -->
    <g filter="url(#cl)"><ellipse cx="52" cy="9" rx="17" ry="5" fill="#d3def2" opacity=".85"/><ellipse cx="76" cy="9" rx="19" ry="7" fill="#d6e0f2" opacity=".9"/><ellipse cx="44" cy="23" rx="13" ry="5" fill="#bccfec" opacity=".8"/><ellipse cx="62" cy="17" rx="10" ry="4" fill="#c6d5ee" opacity=".7"/></g>
    <!-- brick building -->
    <polygon points="0,46 34,32 56,23 72,14 99,6.8 112,0 118,0 118,60 0,60" fill="#b85a45"/>
    <polygon points="0,46 34,32 56,23 72,14 99,6.8 112,0 112,2 99,8.6 72,15.8 56,24.6 34,33.6 0,47.6" fill="#7a4638"/>
    <polygon points="112,0 118,0 118,30 112,26" fill="#8c5038"/>
    <rect x="114.3" y="3" width="3.7" height="7" fill="#b7a488"/><rect x="114.3" y="13" width="3.7" height="4" fill="#d4ccc0"/><rect x="114.5" y="18" width="3.5" height="8" fill="#4a3d35"/>
    <ellipse cx="105" cy="3.6" rx="6" ry="3.2" fill="#b8c2c8"/>
    <polygon points="99.5,5 105,0.3 111,0.3 111,3" fill="#a9b6bd"/>
    <ellipse cx="75" cy="15.5" rx="3.6" ry="2.6" fill="#5a4038"/>
    <ellipse cx="62" cy="20.5" rx="3.2" ry="2" fill="#6a5048"/>
    <rect x="105" y="8.6" width="3.2" height="5.4" fill="#4a3d3d"/>
    <rect x="88.6" y="14" width="3" height="3.4" fill="#5a3c34"/>
    <rect x="74" y="17.6" width="3.4" height="4.4" fill="#8c6a58"/>
    <rect x="68" y="21.4" width="2.6" height="3" fill="#5a3c34"/>
    <rect x="89" y="27" width="3" height="5" fill="#6a3d32"/>
    <rect x="107" y="18.6" width="2.4" height="3" fill="#6a3d32"/>
    <!-- yellow tower -->
    <polygon points="11,23 17,19.800 33.600,25.600 33.200,37.400 24,43 14,45.400 8.600,46" fill="#efd200"/>
    <polygon points="17.800,22.600 22.600,24 22.600,29.400 17.800,28.600" fill="#5e4440"/>
    <polygon points="28,26.600 31.600,27.800 31.600,32.400 28,31.800" fill="#5e4440"/>
    <polygon points="17.800,32 22.400,32.800 22.400,38.200 17.800,41" fill="#66503e"/>
    <polygon points="28,35 31.400,35.400 31.200,37.400 28,39.400" fill="#66503e"/>
    <polygon points="12.200,27.400 15,25.800 15,30.600 11.800,32" fill="#7c6c30"/>
    <polygon points="11.600,35.400 15,34 15,42 10.800,43.400" fill="#7c6c30"/>
    <path d="M17.800 22.600l4.800 6.800M22.600 24l-4.800 4.600M28 26.600l3.600 5.800M31.600 27.800l-3.600 4M17.800 32l4.600 6.200M22.400 32.800l-4.600 8.200M12.200 27.400l2.800 3.200M11.600 35.400l3.400 6.600" stroke="#e8cc0c" stroke-width=".9" fill="none"/>
    <rect x="23.200" y="24" width="4.200" height="19" fill="#f6dc08"/>
    <ellipse cx="13.600" cy="22.600" rx="1.600" ry="1.800" fill="#3a4f8a"/>
    <!-- grey facade base -->
    <polygon points="0,47.6 8,46 24,43 36,41 60,38 94,33 118,38 118,93 0,93" fill="#9ca5ac"/>
    <!-- brick visible below main beam -->
    <polygon points="68,30 94,21 94,44 68,43" fill="#b35c47"/><polygon points="42.700,39 60,33 60,45 42.700,46" fill="#b05e4a"/><polygon points="24,46 37,41.600 37,47 24,48" fill="#a86452"/>
    <polygon points="67.7,37.6 77.5,38.6 77.5,43 67.7,42" fill="#b65a44"/>
    <polygon points="103,17 118,28 118,40 103,34" fill="#b65a44"/>
    
    <!-- beam undersides (dark) -->
    <polygon points="24,46.200 62,33.800 93.800,24.600 93.800,27 62,36.600 30,47.400" fill="#474c52"/>
    <polygon points="66,35 92,44.6 92,47 66,37.6" fill="#40454b"/>
    <polygon points="103,25 118,34.6 118,38 103,28" fill="#3c4147"/>
    <!-- second beam (receding) -->
    <polygon points="67.6,31.6 94.4,38.6 94.4,43 66,35" fill="#b9c0c7"/>
    <polygon points="43,36.6 60,40.6 60,44 43,39.6" fill="#aeb6bd"/>
    <polygon points="104,33.6 117.8,38.6 117.8,41 104,38" fill="#c2c8ce"/>
    <!-- main beam with letters -->
    <polygon points="22.700,42.400 62,27.200 93.800,15.600 93.800,24.600 62,33.800 24,46.200" fill="#b0b8c1"/>
    <g fill="#667284">
     <polygon points="26,42.600 27.400,42.100 27.600,44.200 26.200,44.700"/><polygon points="29,41.500 30.400,41 30.600,43.200 29.200,43.700"/><polygon points="32,40.300 33.400,39.800 33.600,42.200 32.200,42.700"/><polygon points="35,39.200 36.400,38.700 36.600,41.200 35.200,41.700"/>
     <polygon points="39.500,37.300 41,36.800 41.200,39.600 39.700,40.100"/><polygon points="42.600,36.100 44.100,35.600 44.300,38.600 42.800,39.100"/><polygon points="45.700,34.900 47.200,34.400 47.400,37.500 45.900,38"/><polygon points="48.800,33.700 50.300,33.200 50.500,36.500 49,37"/><polygon points="51.900,32.500 53.400,32 53.600,35.500 52.100,36"/><polygon points="55,31.300 56.500,30.800 56.700,34.500 55.200,35"/>
     <polygon points="60.600,29.400 61.800,29 62,32.600 60.800,33"/>
     <polygon points="66,26.800 68.800,25.800 69,30.800 66.200,31.700"/><polygon points="70.600,25.100 73.400,24.100 73.600,29.300 70.800,30.200"/><polygon points="75.200,23.400 78,22.400 78.200,27.800 75.400,28.700"/><polygon points="79.800,21.700 82.600,20.700 82.800,26.300 80,27.200"/><polygon points="84.400,20 87.200,19 87.400,24.800 84.600,25.700"/><polygon points="89,18.300 91.800,17.300 92,23.300 89.200,24.200"/>
    </g>
    <!-- right diagonal beam -->
    <polygon points="102.9,17.8 117.8,28.2 117.8,34.7 102.9,25" fill="#b4bcc3"/>
    <!-- left wall -->
    <rect x="0" y="47.6" width="8.4" height="44" fill="#939ca3"/>
    <rect x="0.6" y="55" width="7" height="1.4" fill="#4e565e"/>
    <rect x="1.6" y="57" width="0.8" height="30" fill="#aab2b8"/><rect x="4.6" y="57" width="0.8" height="30" fill="#aab2b8"/>
    <!-- glass upper areas -->
    <polygon points="24.7,47 36.4,49 36.4,56 24.7,57.5" fill="#4b5359"/>
    <rect x="51.4" y="49.6" width="8.6" height="6.4" fill="#30363b"/>
    <polygon points="43,57 60,59 60,70 43,68.4" fill="#3d444b"/>
    <rect x="44.2" y="57.4" width="1" height="11.4" fill="#9aa3a9"/><rect x="51" y="58" width="1.2" height="11.4" fill="#8e979d"/><rect x="56" y="58.6" width="1" height="11.2" fill="#8e979d"/>
    <rect x="46" y="60" width="4.6" height="8" fill="#252a2f"/>
    <polygon points="70.3,47.6 89.2,45.6 89.2,72 70.3,71" fill="#2b3137"/>
    <g stroke="#7f8990" stroke-width="0.7"><line x1="70.3" y1="51" x2="89.2" y2="49.4"/><line x1="70.3" y1="54.4" x2="89.2" y2="53.2"/><line x1="70.3" y1="57.8" x2="89.2" y2="57"/><line x1="70.3" y1="61.2" x2="89.2" y2="60.8"/><line x1="70.3" y1="64.6" x2="89.2" y2="64.6"/><line x1="70.3" y1="68" x2="89.2" y2="68.4"/></g>
    <rect x="82" y="62.4" width="4" height="9.6" fill="none" stroke="#aab3b9" stroke-width="0.8"/>
    <!-- orange -->
    <rect x="8.4" y="48" width="3" height="11" fill="#d9a05a"/>
    <polygon points="12,47.4 14.2,47 14.2,58 12,58.4" fill="#f08c10"/>
    <polygon points="16.2,46.4 20.5,45.6 20.5,57.2 16.2,57.8" fill="#f08c10"/>
    <polygon points="8.1,59 28,56.4 36.1,55.4 36.1,60 28.6,61 28.6,67.1 59.8,70.1 59.8,73 28,70.7 28,72.7 7.8,73.6" fill="#ef8a0e"/>
    <polygon points="8.4,70.7 24.7,69.7 24.7,71.3 8.4,72.3" fill="#f8e6cc"/>
    <polygon points="29.2,61.6 35.6,60.8 35.6,66.6 29.2,66.2" fill="#5d6a70"/>
    <polygon points="42.9,54.8 59.8,57 59.8,59 42.9,56.8" fill="#ee8c14"/>
    <polygon points="56,69.8 60,70.2 60,73.2 56,72.8" fill="#ef8a0e"/>
    <polygon points="67,71 89.9,73.6 89.9,76.4 67,74" fill="#ee8c14"/>
    <!-- ground floor glass -->
    <polygon points="9.700,74.200 28,73.200 59.800,73.400 59.800,90.600 9.700,90.600" fill="#8d9896"/>
    <rect x="11" y="76" width="4" height="9" fill="#596762"/>
    <rect x="18" y="75" width="9" height="14" fill="#74817e"/>
    <rect x="37.600" y="73.400" width="6.400" height="17" fill="#414a4c"/>
    <rect x="39.6" y="79" width="4" height="3.4" fill="#a89a22"/>
    <rect x="52" y="74" width="3" height="16.600" fill="#3a4245"/>
    <rect x="57.4" y="74" width="1.6" height="16.6" fill="#2c3336"/>
    <rect x="28.4" y="78" width="5" height="12.6" fill="none" stroke="#a9b1b4" stroke-width="0.8"/>
    <rect x="45.4" y="73.4" width="3.2" height="17.2" fill="#8f999c"/>
    <polygon points="67,74.300 90,76.600 90,90.600 67,90.600" fill="#4d5559"/>
    <rect x="69.6" y="75" width="1.6" height="15.6" fill="#98a1a5"/><rect x="74" y="75.6" width="1.4" height="15" fill="#98a1a5"/><rect x="78.6" y="76" width="1.4" height="14.6" fill="#8c9599"/><rect x="83.6" y="76.4" width="2.4" height="14.2" fill="#7c868b"/>
    <!-- columns -->
    <polygon points="37,41 42.7,39.6 42.7,73 37,72.4" fill="#a5aeb5"/>
    <rect x="60" y="33.5" width="8.2" height="57.6" fill="#b0b8bf"/>
    <rect x="60" y="33.5" width="1.6" height="57.6" fill="#969fa7"/>
    <polygon points="91,20 94.4,16 102.9,15.9 103,91 90.4,91" fill="#b5bdc4"/>
    <polygon points="91,20 94.4,16 94.4,91 90.4,91" fill="#9da6ad"/>
    <rect x="96" y="60" width="8" height="31" fill="#a3acb4"/>
    <!-- umbrellas -->
    <polygon points="74.2,81.6 79.6,78.2 85.3,80.6 84,82.4 75.6,82.4" fill="#f2d400"/>
    <polygon points="81.4,83 89,77.9 95,81.6 93.6,84 83,84.4" fill="#f5d800"/>
    <rect x="76" y="84.6" width="16" height="5.6" fill="#8a8478" opacity=".7"/>
    <!-- tree -->
    <path d="M104,47 C102,42 107,38 112,37.600 L118,36.800 L118,92 L105,92 L105,85 C99,83 96.600,78 99,72 C96,67 97.600,59 101,56 C99.600,52 101,49 104,47Z" fill="url(#tree)"/>
    <g filter="url(#lf)">
     <ellipse cx="111" cy="47" rx="6" ry="7" fill="#8cab66" opacity=".8"/>
     <ellipse cx="103.500" cy="61" rx="4" ry="6" fill="#86a660" opacity=".8"/>
     <ellipse cx="114" cy="62" rx="4" ry="8" fill="#557a3c" opacity=".8"/>
     <ellipse cx="102" cy="75" rx="4" ry="5" fill="#7e9e58" opacity=".8"/>
     <ellipse cx="109" cy="71" rx="3" ry="6" fill="#4c6e36" opacity=".75"/>
     <ellipse cx="99" cy="68" rx="2.400" ry="3" fill="#7d9d5a" opacity=".7"/>
     <ellipse cx="100" cy="81" rx="3" ry="2.400" fill="#6c8c4c" opacity=".7"/>
    </g>
    <polygon points="106,83 118,80 118,92 106,92" fill="#2d3622"/>
    <rect x="104.800" y="79" width="5.200" height="3.800" rx="1.600" fill="#d8c616"/>
    <rect x="110.600" y="84" width="1" height="8" fill="#8d968c"/><rect x="114.600" y="84" width="1" height="8" fill="#8d968c"/>
    <!-- ground + people -->
    <rect x="0" y="90.4" width="118" height="2.6" fill="#cbc6bd"/>
    <rect x="2" y="83" width="9" height="8" fill="#b7b4b0"/>
    <rect x="3.4" y="81" width="1.8" height="8" fill="#8a7f7a"/><rect x="6.6" y="80.6" width="1.8" height="5" fill="#c9c4c0"/><rect x="9.4" y="82" width="1.8" height="5" fill="#e0cdb8"/>
    <ellipse cx="8.6" cy="89.4" rx="2.6" ry="2" fill="#2d2a30"/>
    <rect x="24" y="82.4" width="1.8" height="6.6" fill="#c7c9cc"/><rect x="22.4" y="88" width="6" height="2.4" fill="#26282c"/>
   </g>
   </g>
</svg></div>
  <div class="abs thumb" style="left:826px;top:301px"><svg viewBox="0 0 118 92.5" preserveAspectRatio="none">
   <g clip-path="url(#pc)">
   <rect width="118" height="93" fill="url(#sky)"/>
   <g filter="url(#soft)">
    <!-- clouds -->
    <g filter="url(#cl)"><ellipse cx="52" cy="9" rx="17" ry="5" fill="#d3def2" opacity=".85"/><ellipse cx="76" cy="9" rx="19" ry="7" fill="#d6e0f2" opacity=".9"/><ellipse cx="44" cy="23" rx="13" ry="5" fill="#bccfec" opacity=".8"/><ellipse cx="62" cy="17" rx="10" ry="4" fill="#c6d5ee" opacity=".7"/></g>
    <!-- brick building -->
    <polygon points="0,46 34,32 56,23 72,14 99,6.8 112,0 118,0 118,60 0,60" fill="#b85a45"/>
    <polygon points="0,46 34,32 56,23 72,14 99,6.8 112,0 112,2 99,8.6 72,15.8 56,24.6 34,33.6 0,47.6" fill="#7a4638"/>
    <polygon points="112,0 118,0 118,30 112,26" fill="#8c5038"/>
    <rect x="114.3" y="3" width="3.7" height="7" fill="#b7a488"/><rect x="114.3" y="13" width="3.7" height="4" fill="#d4ccc0"/><rect x="114.5" y="18" width="3.5" height="8" fill="#4a3d35"/>
    <ellipse cx="105" cy="3.6" rx="6" ry="3.2" fill="#b8c2c8"/>
    <polygon points="99.5,5 105,0.3 111,0.3 111,3" fill="#a9b6bd"/>
    <ellipse cx="75" cy="15.5" rx="3.6" ry="2.6" fill="#5a4038"/>
    <ellipse cx="62" cy="20.5" rx="3.2" ry="2" fill="#6a5048"/>
    <rect x="105" y="8.6" width="3.2" height="5.4" fill="#4a3d3d"/>
    <rect x="88.6" y="14" width="3" height="3.4" fill="#5a3c34"/>
    <rect x="74" y="17.6" width="3.4" height="4.4" fill="#8c6a58"/>
    <rect x="68" y="21.4" width="2.6" height="3" fill="#5a3c34"/>
    <rect x="89" y="27" width="3" height="5" fill="#6a3d32"/>
    <rect x="107" y="18.6" width="2.4" height="3" fill="#6a3d32"/>
    <!-- yellow tower -->
    <polygon points="11,23 17,19.800 33.600,25.600 33.200,37.400 24,43 14,45.400 8.600,46" fill="#efd200"/>
    <polygon points="17.800,22.600 22.600,24 22.600,29.400 17.800,28.600" fill="#5e4440"/>
    <polygon points="28,26.600 31.600,27.800 31.600,32.400 28,31.800" fill="#5e4440"/>
    <polygon points="17.800,32 22.400,32.800 22.400,38.200 17.800,41" fill="#66503e"/>
    <polygon points="28,35 31.400,35.400 31.200,37.400 28,39.400" fill="#66503e"/>
    <polygon points="12.200,27.400 15,25.800 15,30.600 11.800,32" fill="#7c6c30"/>
    <polygon points="11.600,35.400 15,34 15,42 10.800,43.400" fill="#7c6c30"/>
    <path d="M17.800 22.600l4.800 6.800M22.600 24l-4.800 4.600M28 26.600l3.600 5.800M31.600 27.800l-3.600 4M17.800 32l4.600 6.200M22.400 32.800l-4.600 8.200M12.200 27.400l2.800 3.200M11.600 35.400l3.400 6.600" stroke="#e8cc0c" stroke-width=".9" fill="none"/>
    <rect x="23.200" y="24" width="4.200" height="19" fill="#f6dc08"/>
    <ellipse cx="13.600" cy="22.600" rx="1.600" ry="1.800" fill="#3a4f8a"/>
    <!-- grey facade base -->
    <polygon points="0,47.6 8,46 24,43 36,41 60,38 94,33 118,38 118,93 0,93" fill="#9ca5ac"/>
    <!-- brick visible below main beam -->
    <polygon points="68,30 94,21 94,44 68,43" fill="#b35c47"/><polygon points="42.700,39 60,33 60,45 42.700,46" fill="#b05e4a"/><polygon points="24,46 37,41.600 37,47 24,48" fill="#a86452"/>
    <polygon points="67.7,37.6 77.5,38.6 77.5,43 67.7,42" fill="#b65a44"/>
    <polygon points="103,17 118,28 118,40 103,34" fill="#b65a44"/>
    
    <!-- beam undersides (dark) -->
    <polygon points="24,46.200 62,33.800 93.800,24.600 93.800,27 62,36.600 30,47.400" fill="#474c52"/>
    <polygon points="66,35 92,44.6 92,47 66,37.6" fill="#40454b"/>
    <polygon points="103,25 118,34.6 118,38 103,28" fill="#3c4147"/>
    <!-- second beam (receding) -->
    <polygon points="67.6,31.6 94.4,38.6 94.4,43 66,35" fill="#b9c0c7"/>
    <polygon points="43,36.6 60,40.6 60,44 43,39.6" fill="#aeb6bd"/>
    <polygon points="104,33.6 117.8,38.6 117.8,41 104,38" fill="#c2c8ce"/>
    <!-- main beam with letters -->
    <polygon points="22.700,42.400 62,27.200 93.800,15.600 93.800,24.600 62,33.800 24,46.200" fill="#b0b8c1"/>
    <g fill="#667284">
     <polygon points="26,42.600 27.400,42.100 27.600,44.200 26.200,44.700"/><polygon points="29,41.500 30.400,41 30.600,43.200 29.200,43.700"/><polygon points="32,40.300 33.400,39.800 33.600,42.200 32.200,42.700"/><polygon points="35,39.200 36.400,38.700 36.600,41.200 35.200,41.700"/>
     <polygon points="39.500,37.300 41,36.800 41.200,39.600 39.700,40.100"/><polygon points="42.600,36.100 44.100,35.600 44.300,38.600 42.800,39.100"/><polygon points="45.700,34.900 47.200,34.400 47.400,37.500 45.900,38"/><polygon points="48.800,33.700 50.300,33.200 50.500,36.500 49,37"/><polygon points="51.900,32.500 53.400,32 53.600,35.500 52.100,36"/><polygon points="55,31.300 56.500,30.800 56.700,34.500 55.200,35"/>
     <polygon points="60.600,29.400 61.800,29 62,32.600 60.800,33"/>
     <polygon points="66,26.800 68.800,25.800 69,30.800 66.200,31.700"/><polygon points="70.600,25.100 73.400,24.100 73.600,29.300 70.800,30.200"/><polygon points="75.200,23.400 78,22.400 78.200,27.800 75.400,28.700"/><polygon points="79.800,21.700 82.600,20.700 82.800,26.300 80,27.200"/><polygon points="84.400,20 87.200,19 87.400,24.800 84.600,25.700"/><polygon points="89,18.300 91.800,17.300 92,23.300 89.200,24.200"/>
    </g>
    <!-- right diagonal beam -->
    <polygon points="102.9,17.8 117.8,28.2 117.8,34.7 102.9,25" fill="#b4bcc3"/>
    <!-- left wall -->
    <rect x="0" y="47.6" width="8.4" height="44" fill="#939ca3"/>
    <rect x="0.6" y="55" width="7" height="1.4" fill="#4e565e"/>
    <rect x="1.6" y="57" width="0.8" height="30" fill="#aab2b8"/><rect x="4.6" y="57" width="0.8" height="30" fill="#aab2b8"/>
    <!-- glass upper areas -->
    <polygon points="24.7,47 36.4,49 36.4,56 24.7,57.5" fill="#4b5359"/>
    <rect x="51.4" y="49.6" width="8.6" height="6.4" fill="#30363b"/>
    <polygon points="43,57 60,59 60,70 43,68.4" fill="#3d444b"/>
    <rect x="44.2" y="57.4" width="1" height="11.4" fill="#9aa3a9"/><rect x="51" y="58" width="1.2" height="11.4" fill="#8e979d"/><rect x="56" y="58.6" width="1" height="11.2" fill="#8e979d"/>
    <rect x="46" y="60" width="4.6" height="8" fill="#252a2f"/>
    <polygon points="70.3,47.6 89.2,45.6 89.2,72 70.3,71" fill="#2b3137"/>
    <g stroke="#7f8990" stroke-width="0.7"><line x1="70.3" y1="51" x2="89.2" y2="49.4"/><line x1="70.3" y1="54.4" x2="89.2" y2="53.2"/><line x1="70.3" y1="57.8" x2="89.2" y2="57"/><line x1="70.3" y1="61.2" x2="89.2" y2="60.8"/><line x1="70.3" y1="64.6" x2="89.2" y2="64.6"/><line x1="70.3" y1="68" x2="89.2" y2="68.4"/></g>
    <rect x="82" y="62.4" width="4" height="9.6" fill="none" stroke="#aab3b9" stroke-width="0.8"/>
    <!-- orange -->
    <rect x="8.4" y="48" width="3" height="11" fill="#d9a05a"/>
    <polygon points="12,47.4 14.2,47 14.2,58 12,58.4" fill="#f08c10"/>
    <polygon points="16.2,46.4 20.5,45.6 20.5,57.2 16.2,57.8" fill="#f08c10"/>
    <polygon points="8.1,59 28,56.4 36.1,55.4 36.1,60 28.6,61 28.6,67.1 59.8,70.1 59.8,73 28,70.7 28,72.7 7.8,73.6" fill="#ef8a0e"/>
    <polygon points="8.4,70.7 24.7,69.7 24.7,71.3 8.4,72.3" fill="#f8e6cc"/>
    <polygon points="29.2,61.6 35.6,60.8 35.6,66.6 29.2,66.2" fill="#5d6a70"/>
    <polygon points="42.9,54.8 59.8,57 59.8,59 42.9,56.8" fill="#ee8c14"/>
    <polygon points="56,69.8 60,70.2 60,73.2 56,72.8" fill="#ef8a0e"/>
    <polygon points="67,71 89.9,73.6 89.9,76.4 67,74" fill="#ee8c14"/>
    <!-- ground floor glass -->
    <polygon points="9.700,74.200 28,73.200 59.800,73.400 59.800,90.600 9.700,90.600" fill="#8d9896"/>
    <rect x="11" y="76" width="4" height="9" fill="#596762"/>
    <rect x="18" y="75" width="9" height="14" fill="#74817e"/>
    <rect x="37.600" y="73.400" width="6.400" height="17" fill="#414a4c"/>
    <rect x="39.6" y="79" width="4" height="3.4" fill="#a89a22"/>
    <rect x="52" y="74" width="3" height="16.600" fill="#3a4245"/>
    <rect x="57.4" y="74" width="1.6" height="16.6" fill="#2c3336"/>
    <rect x="28.4" y="78" width="5" height="12.6" fill="none" stroke="#a9b1b4" stroke-width="0.8"/>
    <rect x="45.4" y="73.4" width="3.2" height="17.2" fill="#8f999c"/>
    <polygon points="67,74.300 90,76.600 90,90.600 67,90.600" fill="#4d5559"/>
    <rect x="69.6" y="75" width="1.6" height="15.6" fill="#98a1a5"/><rect x="74" y="75.6" width="1.4" height="15" fill="#98a1a5"/><rect x="78.6" y="76" width="1.4" height="14.6" fill="#8c9599"/><rect x="83.6" y="76.4" width="2.4" height="14.2" fill="#7c868b"/>
    <!-- columns -->
    <polygon points="37,41 42.7,39.6 42.7,73 37,72.4" fill="#a5aeb5"/>
    <rect x="60" y="33.5" width="8.2" height="57.6" fill="#b0b8bf"/>
    <rect x="60" y="33.5" width="1.6" height="57.6" fill="#969fa7"/>
    <polygon points="91,20 94.4,16 102.9,15.9 103,91 90.4,91" fill="#b5bdc4"/>
    <polygon points="91,20 94.4,16 94.4,91 90.4,91" fill="#9da6ad"/>
    <rect x="96" y="60" width="8" height="31" fill="#a3acb4"/>
    <!-- umbrellas -->
    <polygon points="74.2,81.6 79.6,78.2 85.3,80.6 84,82.4 75.6,82.4" fill="#f2d400"/>
    <polygon points="81.4,83 89,77.9 95,81.6 93.6,84 83,84.4" fill="#f5d800"/>
    <rect x="76" y="84.6" width="16" height="5.6" fill="#8a8478" opacity=".7"/>
    <!-- tree -->
    <path d="M104,47 C102,42 107,38 112,37.600 L118,36.800 L118,92 L105,92 L105,85 C99,83 96.600,78 99,72 C96,67 97.600,59 101,56 C99.600,52 101,49 104,47Z" fill="url(#tree)"/>
    <g filter="url(#lf)">
     <ellipse cx="111" cy="47" rx="6" ry="7" fill="#8cab66" opacity=".8"/>
     <ellipse cx="103.500" cy="61" rx="4" ry="6" fill="#86a660" opacity=".8"/>
     <ellipse cx="114" cy="62" rx="4" ry="8" fill="#557a3c" opacity=".8"/>
     <ellipse cx="102" cy="75" rx="4" ry="5" fill="#7e9e58" opacity=".8"/>
     <ellipse cx="109" cy="71" rx="3" ry="6" fill="#4c6e36" opacity=".75"/>
     <ellipse cx="99" cy="68" rx="2.400" ry="3" fill="#7d9d5a" opacity=".7"/>
     <ellipse cx="100" cy="81" rx="3" ry="2.400" fill="#6c8c4c" opacity=".7"/>
    </g>
    <polygon points="106,83 118,80 118,92 106,92" fill="#2d3622"/>
    <rect x="104.800" y="79" width="5.200" height="3.800" rx="1.600" fill="#d8c616"/>
    <rect x="110.600" y="84" width="1" height="8" fill="#8d968c"/><rect x="114.600" y="84" width="1" height="8" fill="#8d968c"/>
    <!-- ground + people -->
    <rect x="0" y="90.4" width="118" height="2.6" fill="#cbc6bd"/>
    <rect x="2" y="83" width="9" height="8" fill="#b7b4b0"/>
    <rect x="3.4" y="81" width="1.8" height="8" fill="#8a7f7a"/><rect x="6.6" y="80.6" width="1.8" height="5" fill="#c9c4c0"/><rect x="9.4" y="82" width="1.8" height="5" fill="#e0cdb8"/>
    <ellipse cx="8.6" cy="89.4" rx="2.6" ry="2" fill="#2d2a30"/>
    <rect x="24" y="82.4" width="1.8" height="6.6" fill="#c7c9cc"/><rect x="22.4" y="88" width="6" height="2.4" fill="#26282c"/>
   </g>
   </g>
</svg></div>
  <div id="reg" class="abs"><span>Регистрация</span></div>
  <div id="footer" class="abs">
   <div class="abs c">COPYRIGHT @ 2012 LIKE LABS</div>
   <div class="abs l" style="letter-spacing:-.17px">КОНФИДЕНЦИАЛЬНОСТЬ</div><div class="abs l" style="left:784.500px;letter-spacing:-.3px">О НАС</div><div class="abs l" style="left:835px">КОНТАКТЫ</div>
  </div>
 </div>
</div>
<div id="sb" class="abs"><div id="sbt" class="abs"><i></i></div><svg class="abs" style="left:0;top:0" width="17" height="666" viewBox="0 0 17 666"><path d="M5.500 12.500l3.500-4 3.500 4z" fill="#2a2a2a"/><path d="M5.500 655l3.500 4 3.500-4z" fill="#2a2a2a"/></svg></div>
<!-- chrome -->
<div id="titlebar" class="abs"><div class="abs glare"></div><div class="abs edge"></div>
 <div id="ffbtn" class="abs">Firefox<i></i></div>
 <div id="tab" class="abs"><div class="abs fav"></div><span>LikeLabs</span></div>
 <!-- ruler + new tab -->
 <svg class="abs" style="left:1194px;top:5px" width="22" height="16" viewBox="0 0 22 16"><rect x="3" y="12.6" width="15" height="1.6" fill="#8fa3bb" opacity=".6"/><rect x="2.5" y="2" width="15.5" height="10" rx="1" fill="#f2c13c" stroke="#c9962a" stroke-width=".8"/><path d="M5 12V9M8 12V7.5M11 12V9M14 12V7.5M16.5 12V9" stroke="#8a6514" stroke-width="1"/></svg>
 <svg class="abs" style="left:1220px;top:5px" width="16" height="16" viewBox="0 0 16 16"><path d="M6.5 2h3v4.5H14v3H9.500V14h-3V9.500H2v-3h4.500z" fill="#fff" stroke="#4d5764" stroke-width="1"/></svg>
 <!-- window controls -->
 <div id="wc" class="abs">
  <div class="abs b1"></div><div class="abs b2"></div><div class="abs b3"></div>
  <svg class="abs" style="left:0;top:0" width="104" height="18" viewBox="0 0 104 18">
   <rect x="10.500" y="8.500" width="11" height="3.600" fill="#fff" stroke="#3f4a58" stroke-width="1"/>
   <rect x="39.500" y="3.500" width="7.500" height="7.500" fill="none" stroke="#3f4a58" stroke-width="3"/><rect x="39.500" y="3.500" width="7.500" height="7.500" fill="none" stroke="#fff" stroke-width="1.200"/>
   <rect x="36.500" y="6.500" width="7.500" height="7.500" fill="#c6d6e8" stroke="#3f4a58" stroke-width="3"/><rect x="36.500" y="6.500" width="7.500" height="7.500" fill="#b9cbe0" stroke="#fff" stroke-width="1.200"/>
   <path d="M75.500 4.500l8 7.500M83.500 4.500l-8 7.500" stroke="#5a2018" stroke-width="4.400"/><path d="M75.500 4.500l8 7.500M83.500 4.500l-8 7.500" stroke="#fff" stroke-width="2.600"/>
  </svg>
 </div>
</div>
<div id="navbar" class="abs"><div class="abs edge"></div></div>
<div id="urlbar" class="abs"><div class="abs txt"><b>50.18.104.74</b>:8020/public</div>
 <svg class="abs" style="left:10px;top:3.500px" width="16" height="16" viewBox="0 0 16 16"><circle cx="8" cy="7.300" r="6.800" fill="#a3a3a3"/><path d="M4 3.200c1.500-.8 3-.6 3.600.2-.2 1-1.400 1.400-1.600 2.600-.2 1 .6 1.600.2 2.400-.8.400-2-.4-2.800-1.400C2.600 5.800 3 4.200 4 3.200zM9 6.400c.8-.6 2.400-.4 3.200.4.600 1 .4 2.600-.6 3.600-.8.800-1.800.6-2-.4-.2-1.200-1.400-2.400-.6-3.600zM9.400 2c.8-.2 2 .2 2.600 1-.6.600-2 .4-2.600-.2z" fill="#dadada"/></svg>
 <!-- star, dropdown, reload -->
 <svg class="abs" style="left:896px;top:2px" width="56" height="20" viewBox="0 0 56 20"><path d="M9.800 1.600l2.300 5.200 5.600.5-4.200 3.800 1.300 5.600-5-3-5 3 1.300-5.600L1.900 7.300l5.600-.5z" fill="#f7f7f7" stroke="#9c9c9c" stroke-width="1"/><path d="M24.700 8.200h9.400l-4.700 6.700z" fill="#d6dbe3" stroke="#bcc2cb" stroke-width=".8"/><path d="M50 7.600a4.600 4.600 0 1 0 1.300 5.200" fill="none" stroke="#7c8896" stroke-width="2.200"/><path d="M52.200 4.800v6.200h-6z" fill="#7c8896"/></svg>
</div>
<div id="back" class="abs"><svg class="abs" style="left:0;top:0" width="30" height="30" viewBox="0 0 30 30"><path d="M8.400 15.200l6-6M8.400 15.200l6 6M9 15.200h11.600" fill="none" stroke="#4a5663" stroke-width="3.200" stroke-linecap="square"/></svg></div>
<div id="search" class="abs"><div class="abs txt">Google</div>
 <svg class="abs" style="left:4px;top:3px" width="32" height="17" viewBox="0 0 32 17"><rect x="0" y="0" width="16" height="16" rx="1.500" fill="#fff"/><ellipse cx="4.600" cy="3.600" rx="2.600" ry="3.400" fill="#1455c0" transform="rotate(12 4.600 3.600)"/><path d="M0 6.400l4.200 1.800L0 10.600z" fill="#1a4fb4"/><path d="M9 0h5.500a1.500 1.500 0 0 1 1.500 1.500V6H9z" fill="#e8160c"/><path d="M10 5h6v9.500a1.500 1.500 0 0 1-1.500 1.500H9c1.400-2 1.200-3.600-.6-5.400C7 9 8 6 10 5z" fill="#0a9a3c"/><ellipse cx="4.800" cy="13" rx="3.800" ry="2.800" fill="#f3b60c" transform="rotate(-8 4.800 13)"/><path d="M19.600 7.200h5.600l-2.800 3z" fill="#555"/></svg>
 <svg class="abs" style="left:268px;top:3px" width="16" height="16" viewBox="0 0 16 16"><circle cx="9.600" cy="5.600" r="3.700" fill="#fff" stroke="#2c6cb4" stroke-width="1.700"/><path d="M6.800 8.600L2.200 13.400" stroke="#2c6cb4" stroke-width="2.200" stroke-linecap="round"/></svg>
</div>
<!-- home + bookmarks -->
<svg class="abs" style="left:1291px;top:35px" width="20" height="18" viewBox="0 0 20 18"><path d="M10 1.200L1.200 9.400l1.600 1.600L10 4.400l7.200 6.600 1.600-1.600z" fill="#4c5866"/><path d="M4.400 9.800L10 5l5.600 4.800V16h-3.800v-4.600H8.200V16H4.400z" fill="#4c5866"/></svg>
<svg class="abs" style="left:1328px;top:36px" width="32" height="16" viewBox="0 0 32 16"><rect x=".500" y=".500" width="15.500" height="14" rx="2" fill="#4c5866"/><rect x="2.400" y=".500" width="1.200" height="14" fill="#75818f"/><path d="M10 3l1.400 3.100 3.300.3-2.500 2.300.8 3.300-3-1.800-3 1.800.8-3.300-2.500-2.300 3.300-.3z" fill="#fff"/><path d="M21.800 6.200h7l-3.500 3.600z" fill="#39424d"/></svg>
<!-- taskbar -->
<div id="taskbar" class="abs"><div class="abs tglare"></div><div class="abs thl"></div>
<div class="abs tb" style="left:122px"></div><div class="abs tb2" style="left:176px"></div>
<div class="abs tb" style="left:246px"></div>
<div class="abs tb act" style="left:432px"></div>
<div class="abs tb" style="left:494px"></div>
<div class="abs tb" style="left:556px"></div>
<div class="abs tb" style="left:618px"></div>
<div class="abs tb" style="left:680px"></div>
<svg class="abs" style="left:0;top:-1px" width="1366" height="41" viewBox="0 0 1366 41" font-family="Liberation Sans, sans-serif">
 <defs>
  <radialGradient id="orb" cx=".5" cy=".95" r=".95"><stop offset="0" stop-color="#35d4f6"/><stop offset=".35" stop-color="#0f7ab8"/><stop offset=".7" stop-color="#15588f"/><stop offset="1" stop-color="#3f6f9c"/></radialGradient>
  <linearGradient id="orbhl" x1="0" y1="0" x2="0" y2="1"><stop offset="0" stop-color="#fff" stop-opacity=".75"/><stop offset="1" stop-color="#fff" stop-opacity=".12"/></linearGradient>
  <linearGradient id="gr" x1="0" y1="0" x2="0" y2="1"><stop offset="0" stop-color="#f0581c"/><stop offset="1" stop-color="#f59a2c"/></linearGradient>
  <linearGradient id="gg" x1="0" y1="0" x2="0" y2="1"><stop offset="0" stop-color="#7fb83a"/><stop offset="1" stop-color="#b3d66a"/></linearGradient>
  <linearGradient id="gb" x1="0" y1="0" x2="0" y2="1"><stop offset="0" stop-color="#5aaee8"/><stop offset="1" stop-color="#1f6cbc"/></linearGradient>
  <linearGradient id="gy" x1="0" y1="0" x2="0" y2="1"><stop offset="0" stop-color="#fbd45a"/><stop offset="1" stop-color="#f4a61c"/></linearGradient>
  <linearGradient id="ie" x1="0" y1="0" x2="0" y2="1"><stop offset="0" stop-color="#7fd6f8"/><stop offset="1" stop-color="#1c8fdc"/></linearGradient>
  <linearGradient id="op" x1="0" y1="0" x2="0" y2="1"><stop offset="0" stop-color="#e8302a"/><stop offset=".5" stop-color="#c41414"/><stop offset="1" stop-color="#960a0a"/></linearGradient>
  <radialGradient id="ffg" cx=".45" cy=".3" r=".7"><stop offset="0" stop-color="#7ec8f2"/><stop offset=".5" stop-color="#2a7ccc"/><stop offset="1" stop-color="#143c86"/></radialGradient>
  <linearGradient id="fox" x1="0" y1="0" x2="1" y2="1"><stop offset="0" stop-color="#e2620c"/><stop offset=".6" stop-color="#ea7a10"/><stop offset="1" stop-color="#f8b818"/></linearGradient>
  <radialGradient id="pet" cx=".4" cy=".35" r=".7"><stop offset="0" stop-color="#6bf03a"/><stop offset=".6" stop-color="#1fc010"/><stop offset="1" stop-color="#0a8a06"/></radialGradient>
  <linearGradient id="fold" x1="0" y1="0" x2="0" y2="1"><stop offset="0" stop-color="#fbeeb8"/><stop offset="1" stop-color="#efcf74"/></linearGradient>
  <linearGradient id="xl" x1="0" y1="0" x2="0" y2="1"><stop offset="0" stop-color="#e8f4e4"/><stop offset=".45" stop-color="#7fc27a"/><stop offset="1" stop-color="#e6f2e2"/></linearGradient>
  <linearGradient id="wd" x1="0" y1="0" x2="0" y2="1"><stop offset="0" stop-color="#ffffff"/><stop offset=".5" stop-color="#a9c8f0"/><stop offset="1" stop-color="#f2f6fc"/></linearGradient>
  <linearGradient id="sk" x1="0" y1="0" x2="0" y2="1"><stop offset="0" stop-color="#5cc6f4"/><stop offset="1" stop-color="#0c9ce6"/></linearGradient>
 </defs>
 <!-- start orb (cx 27 cy 19.5) -->
 <circle cx="27" cy="20" r="17.600" fill="url(#orb)" stroke="#1f4e7c" stroke-width="1"/>
 <circle cx="27" cy="20" r="18.300" fill="none" stroke="#c8dcf0" stroke-width=".7" opacity=".7"/>
 <path d="M10.400 18a16.600 16.600 0 0 1 33.200 0c-10 4-23 4-33.200 0z" fill="url(#orbhl)"/>
 <g transform="translate(27.300 20.200) scale(1.260) translate(-26.600 -19)">
 <path d="M19.800 10.600c2.400-1.200 4.800-1 7 .2l-1.700 7c-2.200-1.100-4.500-1.400-7-.3z" fill="url(#gr)"/>
 <path d="M28.300 11.500c2.400 1.200 4.700 1.300 7.200.2l-1.800 7.100c-2.400 1-4.800 1-7.100-.3z" fill="url(#gg)"/>
 <path d="M17.700 19c2.400-1.100 4.800-.9 7 .3l-1.800 7.200c-2.200-1.200-4.600-1.500-7-.4z" fill="url(#gb)"/>
 <path d="M26.200 20c2.400 1.200 4.700 1.300 7.200.2l-1.800 7.200c-2.400 1-4.800 1-7.200-.3z" fill="url(#gy)"/>
 </g>
 <!-- IE (cx 90) -->
 <text x="90.600" y="33" font-size="50" font-weight="bold" text-anchor="middle" fill="url(#ie)" stroke="#1a7cc8" stroke-width=".6">e</text>
 <path d="M81 33.600C73.400 33.400 72.600 24.500 79 17 85 10 95 3.600 100.800 4.500 103.600 5.100 103.800 8 102.600 10.400" fill="none" stroke="#f7b90e" stroke-width="2.500" stroke-linecap="round"/><path d="M79.600 17.600C85.500 10.600 95 4.800 100.600 5.400" fill="none" stroke="#fde27a" stroke-width=".9"/>
 <path d="M80.500 19.400h17" stroke="#58bdf0" stroke-width="0"/>
 <!-- Explorer (132..164, y 7..36) -->
 <path d="M132.500 13v21a1 1 0 0 0 1 1h29a1 1 0 0 0 1-1V14.500l-1-1.500v-2l-1.500-1.500h-10l-1 1v-1l-1-1h-1.500l-1-1.500h-12l-1 1z" fill="url(#fold)" stroke="#c9a452" stroke-width="1"/>
 <path d="M133.500 15.500h11l1.500-2h17" fill="none" stroke="#d9b660" stroke-width=".8"/>
 <rect x="136" y="9.400" width="3" height="1.900" fill="#18b42a"/><rect x="139.400" y="9.400" width="6.500" height="1.900" fill="#fff"/>
 <rect x="144.300" y="11.600" width="2.600" height="1.800" fill="#d82a1c"/><rect x="147.200" y="11.600" width="6" height="1.800" fill="#fff"/>
 <rect x="152" y="13.800" width="2.800" height="1.800" fill="#1c8cf0"/><rect x="155.200" y="13.800" width="5" height="1.800" fill="#fff"/>
 <path d="M136.500 35.800v-9.300a1.500 1.500 0 0 1 1.500-1.500h20a1.500 1.500 0 0 1 1.500 1.500v9.300h-6.300v-4.300h-10.400v4.300z" fill="#8fcdf0" fill-opacity=".88" stroke="#3f9ad6" stroke-width="1"/>
 <path d="M138 27.600h19" stroke="#d8f0fc" stroke-width="1.400"/>
 <path d="M139.400 20v14M133.600 27.600h12M136 24l7 7M143 24l-7 7" stroke="#fff" stroke-width=".7" opacity=".9"/>
 <!-- WMP (199..225, y 11..35) -->
 <g transform="translate(0 -1.5)">
 <path d="M218 11.500l4 1.500v21.500l-4-1.500z" fill="#9fc9e8" stroke="#6ba6d2" stroke-width=".7"/><path d="M220.500 11.500l4 1.500v21.500l-4-1.500z" fill="#b5d6ee" stroke="#6ba6d2" stroke-width=".7"/>
 <rect x="199.500" y="11.500" width="20.500" height="22" fill="#a9d1ee" stroke="#62a0cf" stroke-width="1"/>
 <circle cx="209.600" cy="22.800" r="8.600" fill="#f07a18"/><circle cx="209.600" cy="22.800" r="8.600" fill="none" stroke="#e0600c" stroke-width=".8"/>
 <path d="M206 17.400l9.200 5.400-9.200 5.600z" fill="#fff"/>
 </g>
 <!-- Chrome (cx 275 cy 20) -->
 <g transform="translate(275 20)">
  <circle r="14" fill="#4aae48"/>
  <path d="M0 0L-12.124-7A14 14 0 0 1 12.124-7z" fill="#e0362c"/>
  <path d="M0 0L12.124-7A14 14 0 0 1 0 14z" fill="#fbd21c"/>
  <path d="M0 0L0 14A14 14 0 0 1-12.124-7z" fill="#4aae48"/>
  <path d="M0-6.500h12.300A14 14 0 0 0-12.124-7L-5.800 3z" fill="#e0362c"/>
  <path d="M5.630 3.250L-0.500 13.990A14 14 0 0 0 12.300-6.500H0z" fill="#fbd21c"/>
  <path d="M-5.630 3.250L-12.124-7A14 14 0 0 0-0.500 13.990L5.630 3.250z" fill="#4aae48"/>
  <circle r="6.600" fill="#fff"/><circle r="5.200" fill="#3a80d4"/>
 </g>
 <!-- Opera (cx 337 cy 19.4) -->
 <path d="M337 5.200c8 0 14 6 14 14.300s-6 14.300-14 14.300-14-6-14-14.300 6-14.300 14-14.300zm0 3.400c-3 0-5 4.600-5 10.900s2 10.900 5 10.900 5-4.600 5-10.900-2-10.900-5-10.900z" fill="url(#op)" fill-rule="evenodd" stroke="#8a0a0a" stroke-width=".6"/>
 <path d="M326 12c3-5 9-6.400 14-5" fill="none" stroke="#f58a80" stroke-width="1.200" opacity=".7"/>
 <!-- Word (383..412, y 6..35) -->
 <g transform="translate(0 -2)">
 <path d="M383.500 34.500v-23a5 5 0 0 1 5-5h23v28z" fill="url(#wd)" stroke="#2c5fb4" stroke-width="1.200"/>
 <text x="396.500" y="27.500" font-size="23" font-weight="bold" text-anchor="middle" fill="#1c5cbc" stroke="#1c5cbc" stroke-width=".8">W</text>
 <path d="M387 29l17-7.500 9 3.500-3 9.500h-23z" fill="#fff" opacity=".96"/><path d="M404 21.500l9 3.500-2.500 8" fill="none" stroke="#c8d6ec" stroke-width=".8"/>
 <path d="M392 30l12-4M394 32.500l13-4" stroke="#dbe6f6" stroke-width="1"/>
 </g>
 <!-- Firefox (cx 461.2 cy 21) -->
 <g transform="translate(0 -1)">
 <circle cx="462" cy="20" r="13.200" fill="url(#ffg)"/>
 <path d="M447.200 13.500c.3-2.600 1-4.600 2-6 .3 1.700 1 2.900 2 3.600 1.500-1 3.400-1.300 5.600-1.100-1.400.9-2.300 2-2.700 3.300 1.400.4 2.800.3 4.400-.2-.6 1.700-1.900 2.700-3.800 3.100-.3 1.300.2 2.500 1.400 3.500 1.700 1.400 4 1.300 6.800-.3-.5 2.400-2.100 3.800-4.700 4.300 3 2.400 6.800 2.300 9.800-.4 2.900-2.600 3.800-6.600 2.800-12-.7-3.400-2.400-6-5-7.800 4.700 1.300 8 4.300 9.900 9 1.600 4.800 1 9.400-1.800 13.800-3.200 4.600-7.600 6.900-13.200 6.800-5.400-.2-9.500-2.700-12.300-7.400-2.200-3.800-2.600-7.800-1.200-12.200z" fill="url(#fox)"/>
 <path d="M472.500 9c2 2.400 2.800 5.600 2.400 9.600M468 29.600c3-1 5.400-3 7-6" fill="none" stroke="#fbd430" stroke-width="1.400" opacity=".8"/>
 </g>
 <!-- ICQ (cx 522.4 cy 22) -->
 <g transform="translate(0 -1.7)">
 <g transform="translate(522.400 21.800)">
  <g id="pt"><ellipse cx="0" cy="-9.600" rx="4.300" ry="6.600" fill="url(#pet)" stroke="#0c6a08" stroke-width=".7"/></g>
  <ellipse cx="0" cy="-9.600" rx="4.300" ry="6.600" fill="url(#pet)" stroke="#0c6a08" stroke-width=".7" transform="rotate(45)"/>
  <ellipse cx="0" cy="-9.600" rx="4.300" ry="6.600" fill="url(#pet)" stroke="#0c6a08" stroke-width=".7" transform="rotate(90)"/>
  <ellipse cx="0" cy="-9.600" rx="4.300" ry="6.600" fill="url(#pet)" stroke="#0c6a08" stroke-width=".7" transform="rotate(135)"/>
  <ellipse cx="0" cy="-9.600" rx="4.300" ry="6.600" fill="url(#pet)" stroke="#0c6a08" stroke-width=".7" transform="rotate(180)"/>
  <ellipse cx="0" cy="-9.600" rx="4.300" ry="6.600" fill="url(#pet)" stroke="#0c6a08" stroke-width=".7" transform="rotate(225)"/>
  <ellipse cx="0" cy="-8.600" rx="3.300" ry="5.600" fill="#e8201c" stroke="#901010" stroke-width=".7" transform="rotate(250)"/>
  <ellipse cx="0" cy="-9.600" rx="4.300" ry="6.600" fill="url(#pet)" stroke="#0c6a08" stroke-width=".7" transform="rotate(300)"/>
  <ellipse cx="0" cy="-9.600" rx="4.300" ry="6.600" fill="url(#pet)" stroke="#0c6a08" stroke-width=".7" transform="rotate(340)"/>
  <circle r="3.400" fill="#f8c41c" stroke="#c88c0a" stroke-width=".6"/>
 </g>
 </g>
 <!-- Ps (571..599, y 7..33.3) -->
 <g transform="translate(0 -2)">
 <rect x="572" y="8" width="26" height="24.400" fill="#241f68" stroke="#8cc2f8" stroke-width="2"/>
 <text x="585" y="27" font-size="17.500" font-weight="bold" text-anchor="middle" fill="#9ccdfc">Ps</text>
 </g>
 <!-- Excel (631..660, y 6..35) -->
 <g transform="translate(0 -2)">
 <path d="M631.500 34.500v-23a5 5 0 0 1 5-5h23v28z" fill="url(#xl)" stroke="#2a7a30" stroke-width="1.200"/>
 <text x="643" y="27.500" font-size="24" font-weight="bold" text-anchor="middle" fill="#3c8e2c" stroke="#3c8e2c" stroke-width=".6">X</text>
 <path d="M636.500 11.500l13 15.500" stroke="#9ed058" stroke-width="3.400"/>
 <path d="M635 29l17-7.500 9.500 3.500-3 9.500h-23.500z" fill="#fff" opacity=".97"/>
 <path d="M641 29.600l13-4.800M643 32.400l14-5M650 24l4 9M645 26l3.500 8" stroke="#8cc88a" stroke-width="1"/>
 </g>
 <!-- Skype (cx 709 cy 21) -->
 <g transform="translate(0 -1.6)">
 <circle cx="708.600" cy="20.500" r="13.300" fill="url(#sk)"/><circle cx="698.600" cy="10.600" r="6.200" fill="#46bef2"/><circle cx="719" cy="31" r="6.200" fill="#0c9ce6"/>
 <text x="708.800" y="28.600" font-size="24" font-weight="bold" text-anchor="middle" fill="#fff" stroke="#fff" stroke-width=".5">S</text>
 </g>
 <!-- tray -->
 <text x="1104.400" y="21.800" font-size="12" fill="#fff">RU</text>
 <path d="M1135.400 23.500l4.300-4.600 4.300 4.600z" fill="#fff" stroke="#5c6c80" stroke-width=".6"/>
 <!-- flag -->
 <path d="M1157.500 13v15" stroke="#fff" stroke-width="1.800"/><path d="M1157.500 13v15" stroke="#44505e" stroke-width="0"/>
 <path d="M1159.500 14c3-1.400 5 1.200 8 .4 1.600-.4 2.800-.2 3.800.4l-2 6.400c-1.400-.8-2.800-.6-4.200-.2-2 .6-3.800-.6-5.600.2z" fill="#fff" stroke="#46525f" stroke-width=".8"/>
 <rect x="1156" y="12.400" width="3" height="16" rx="1" fill="none" stroke="#46525f" stroke-width=".7"/>
 <!-- power -->
 <rect x="1181" y="14.500" width="8" height="13" rx="1" fill="none" stroke="#fff" stroke-width="1.600"/><rect x="1183.300" y="12.600" width="3.400" height="2" fill="#fff"/>
 <path d="M1187.500 14v3.400M1191.500 14v3.400" stroke="#fff" stroke-width="1.400"/><path d="M1185.800 17.400h7.400v3a3.700 3.700 0 0 1-7.400 0z" fill="#fff" stroke="#46525f" stroke-width=".7"/><path d="M1189.500 24v3.500h-3" fill="none" stroke="#fff" stroke-width="1.400"/>
 <!-- signal -->
 <path d="M1203.500 26v-2h2v2zM1206.800 26v-4.400h2.200v4.400zM1210.200 26v-7h2.300v7zM1213.700 26v-9.600h2.300v9.600zM1217.200 26v-12h2.300v12z" fill="#fff" stroke="#4a5562" stroke-width=".6"/>
 <!-- dropbox -->
 <path d="M1232 13.400l4 2.600-4 2.600-4-2.600zM1240 13.400l4 2.600-4 2.600-4-2.600zM1232 18.600l4 2.600-4 2.600-4-2.600zM1240 18.600l4 2.600-4 2.600-4-2.600z" fill="#3d9ae8" stroke="#1c6cc0" stroke-width=".5"/><path d="M1232 24.600l4-2.400 4 2.400-4 2.600z" fill="#2a86dc"/>
 <circle cx="1240.400" cy="24.800" r="3.600" fill="#24a82c" stroke="#fff" stroke-width=".7"/><path d="M1238.600 24.800l1.400 1.500 2.400-3" fill="none" stroke="#fff" stroke-width="1.100"/>
 <!-- speaker -->
 <path d="M1256 18h2.600l4.400-4.600v15.200l-4.400-4.600h-2.600z" fill="#fff" stroke="#4a5562" stroke-width=".7"/>
 <!-- clock -->
 <text x="1313.400" y="16.800" font-size="12" text-anchor="middle" fill="#fff">14:52</text>
 <text x="1313" y="34.200" font-size="12" text-anchor="middle" fill="#fff" textLength="54" lengthAdjust="spacingAndGlyphs">21.08.2012</text>
</svg>
<div class="abs showdesk"></div>
</div>
</body>
</html>
